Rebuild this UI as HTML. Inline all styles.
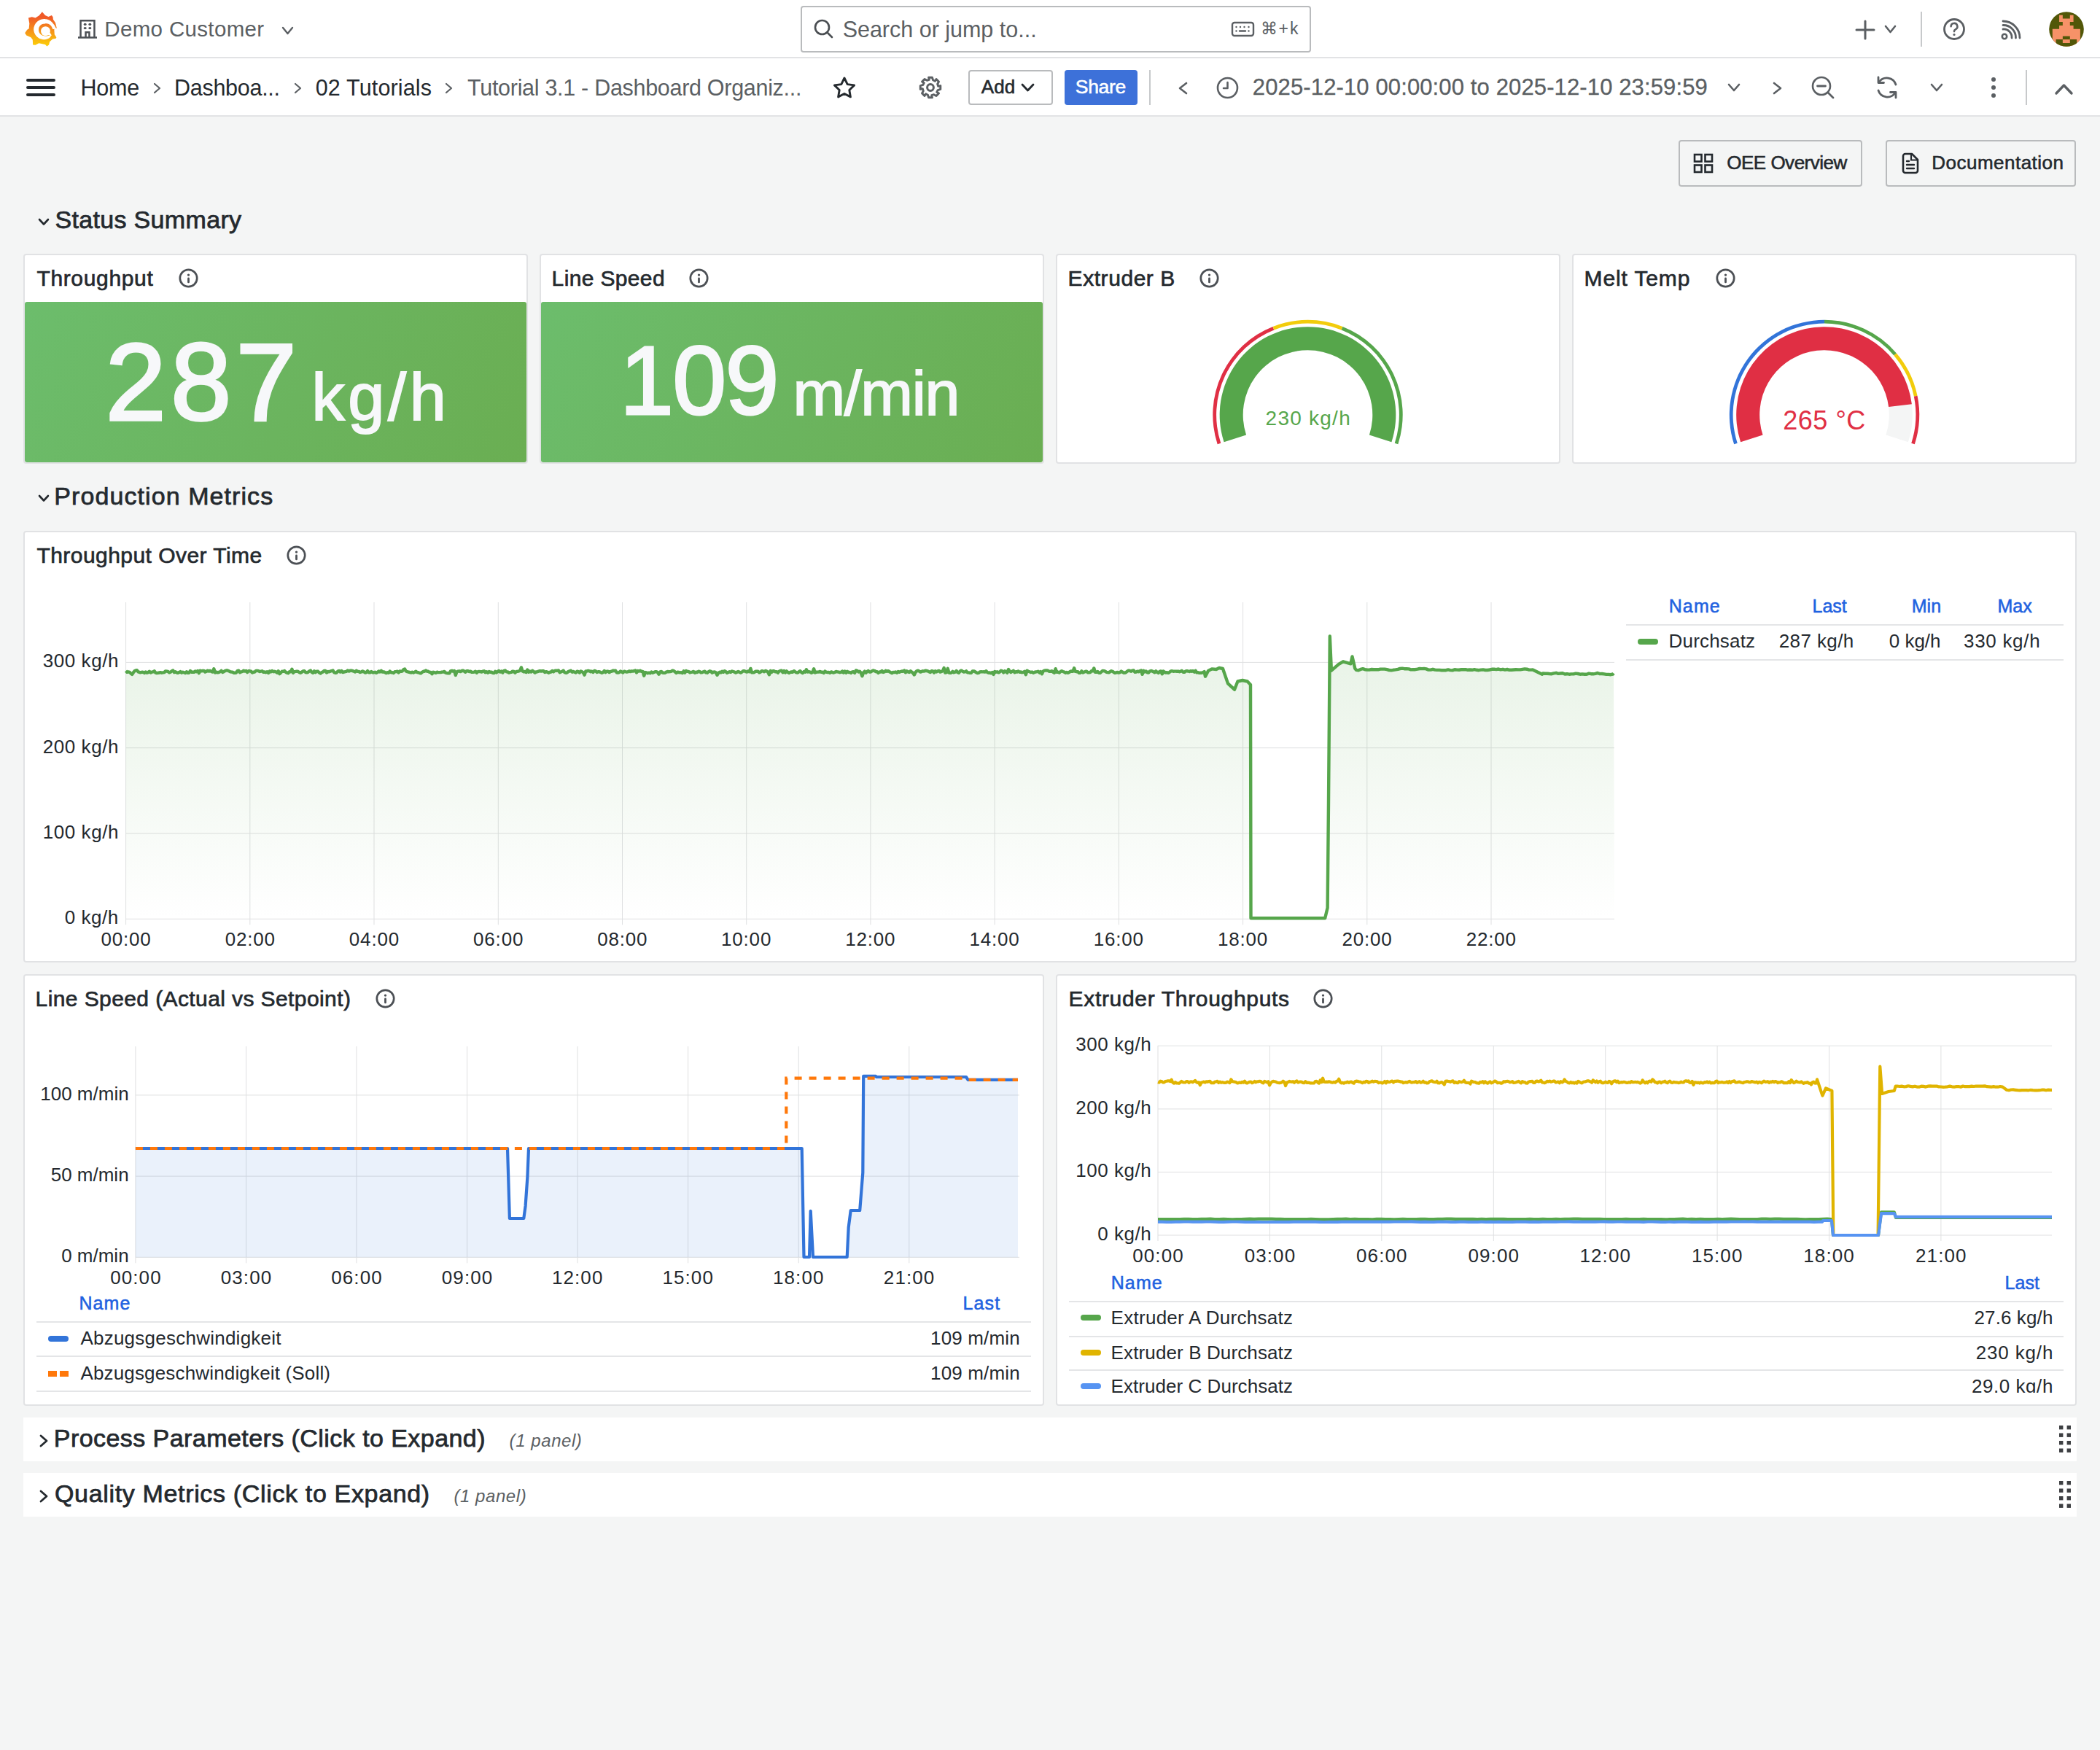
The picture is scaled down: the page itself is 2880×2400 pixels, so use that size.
<!DOCTYPE html>
<html><head><meta charset="utf-8"><title>Grafana</title>
<style>
html,body{margin:0;padding:0;}
body{width:2880px;height:2400px;background:#f4f5f5;position:relative;overflow:hidden;font-family:"Liberation Sans",sans-serif;}
.t{position:absolute;white-space:nowrap;line-height:1em;}
svg{overflow:visible}
@media (max-width:1500px){html{zoom:0.5}}
</style></head><body>
<div style="position:absolute;left:0px;top:0px;width:2880px;height:78px;background:#fff"></div>
<div style="position:absolute;left:0px;top:78px;width:2880px;height:2px;background:#e2e3e5"></div>
<div style="position:absolute;left:0px;top:80px;width:2880px;height:78px;background:#fff"></div>
<div style="position:absolute;left:0px;top:158px;width:2880px;height:2px;background:#e2e3e5"></div>
<svg style="position:absolute;left:28px;top:10px;" width="60" height="60" viewBox="0 0 1750 1750"><defs><linearGradient id="lg" x1="0" y1="0" x2="0" y2="1"><stop offset="0.15" stop-color="#f05a28"/><stop offset="0.95" stop-color="#fbca0a"/></linearGradient></defs><polygon points="870,180 990,320 1120,380 1250,320 1300,390 1310,490 1400,620 1455,840 1420,860 1350,880 1365,1090 1440,1200 1420,1250 1290,1270 1170,1380 1140,1500 1060,1560 990,1490 740,1440 600,1510 500,1500 490,1300 420,1200 240,1120 180,1030 270,900 340,850 360,650 320,420 460,390 600,420 750,330" fill="url(#lg)"/><polygon points="1490,871 1469,853 1447,837 1425,823 1402,810 1397,795 1392,780 1385,766 1379,752 1372,738 1364,725 1356,712 1348,699 1339,687 1330,675 1320,664 1310,653 1300,642 1291,630 1282,619 1273,608 1263,597 1253,587 1242,577 1231,568 1220,559 1209,550 1197,542 1185,534 1173,526 1160,519 1147,513 1134,506 1121,501 1108,495 1094,491 1080,486 1066,483 1052,479 1038,477 1024,474 1010,472 996,471 981,470 967,470 953,470 939,470 924,470 910,472 896,473 881,475 867,478 853,481 839,484 825,488 811,493 798,498 784,503 771,509 758,516 745,523 733,530 720,538 708,546 697,555 685,564 674,573 663,583 653,593 642,604 633,615 623,626 614,638 606,650 597,662 590,675 582,688 575,701 569,714 563,728 557,741 552,755 548,770 544,784 540,798 537,813 535,828 533,843 531,858 530,872 530,888 531,902 533,917 535,932 537,947 540,962 544,976 548,990 552,1005 557,1019 563,1032 569,1046 575,1059 582,1072 590,1085 597,1098 606,1110 614,1122 623,1134 633,1145 642,1156 653,1167 663,1177 674,1187 685,1196 697,1205 708,1214 720,1222 733,1230 745,1237 758,1244 771,1251 784,1257 798,1262 811,1267 825,1272 839,1276 853,1279 867,1282 881,1285 896,1287 910,1288 924,1290 939,1290 953,1290 967,1290 981,1288 996,1287 1010,1285 1024,1282 1038,1279 1051,1275 1065,1271 1078,1267 1091,1262 1104,1256 1117,1250 1130,1244 1142,1237 1154,1230 1165,1221 1175,1211 1184,1200 1193,1189 1201,1178 1209,1167 1217,1155 1224,1144 1230,1132 1236,1120 1241,1108 1230,1099 1219,1105 1208,1111 1196,1116 1185,1121 1173,1125 1162,1129 1150,1132 1139,1135 1127,1137 1116,1139 1105,1141 1095,1144 1084,1147 1074,1149 1064,1150 1053,1152 1043,1152 1033,1153 1023,1153 1013,1153 1003,1152 993,1151 984,1150 974,1148 965,1146 955,1145 946,1143 937,1142 928,1140 919,1138 910,1136 902,1133 893,1130 884,1127 876,1124 868,1120 860,1116 852,1111 844,1107 837,1102 830,1097 823,1091 816,1086 809,1080 803,1074 797,1068 791,1062 785,1055 780,1048 774,1041 769,1034 765,1027 760,1020 756,1012 753,1005 749,997 746,989 743,981 740,973 738,965 736,957 734,949 732,941 731,933 730,925 729,917 729,908 729,900 729,892 730,884 730,876 731,868 731,860 732,852 734,844 735,836 737,829 739,821 742,813 745,806 747,798 751,791 754,784 758,777 762,770 766,763 770,757 775,750 780,744 785,738 790,732 795,726 801,721 807,716 813,711 819,706 825,701 832,697 838,692 845,688 852,685 859,681 866,678 873,675 880,672 888,670 895,668 903,666 910,664 918,663 925,662 933,661 941,660 948,660 956,660 964,659 972,656 980,654 988,653 996,651 1005,650 1013,650 1022,649 1031,649 1039,649 1048,650 1057,651 1066,652 1075,653 1085,655 1094,658 1103,660 1112,663 1121,667 1130,670 1139,675 1147,679 1156,684 1165,689 1173,695 1181,701 1190,707 1198,714 1205,721 1212,728 1219,736 1226,744 1233,753 1239,762 1245,771 1250,780 1256,790 1261,799 1266,809 1270,820 1274,830 1280,841 1285,852 1290,863 1295,874" fill="#fff"/><circle cx="1005" cy="950" r="188" fill="#fff"/><polygon points="1040,1000 1190,1020 1250,1130 1040,1100" fill="#fff"/></svg>
<svg style="position:absolute;left:105px;top:25px;" width="30" height="30" viewBox="0 0 30 30"><path d="M2 26.6 H28 M5.55 26.6 V3.25 H24.45 V26.6" fill="none" stroke="#4c5055" stroke-width="2.5"/><path d="M12.55 26.6 V19.35 H17.45 V26.6" fill="none" stroke="#4c5055" stroke-width="2.5"/><ellipse cx="11.7" cy="8.4" rx="2" ry="1.6" fill="#4c5055"/><ellipse cx="18.3" cy="8.4" rx="2" ry="1.6" fill="#4c5055"/><ellipse cx="11.7" cy="13.6" rx="2" ry="1.6" fill="#4c5055"/><ellipse cx="18.3" cy="13.6" rx="2" ry="1.6" fill="#4c5055"/></svg>
<div class="t" style="top:25.33px;left:143.34px;font-size:29.5px;color:#5b5f63;letter-spacing:0.337px;">Demo Customer</div>
<svg style="position:absolute;left:384.5px;top:34.5px;" width="19" height="14" viewBox="0 0 19 14"><polyline points="3,3 9.5,11 16,3" fill="none" stroke="#5b5f63" stroke-width="2.4" stroke-linecap="round" stroke-linejoin="round"/></svg>
<div style="position:absolute;left:1098px;top:8px;width:696px;height:60px;border:2px solid #b9bbbd;border-radius:4px;background:#fff"></div>
<svg style="position:absolute;left:1115px;top:25px;" width="30" height="30" viewBox="0 0 30 30"><circle cx="12.5" cy="12.5" r="9.5" fill="none" stroke="#4a4e52" stroke-width="2.6"/><line x1="19.5" y1="19.5" x2="26" y2="26" stroke="#4a4e52" stroke-width="2.6" stroke-linecap="round"/></svg>
<div class="t" style="top:24.68px;left:1155.63px;font-size:30.5px;color:#5b5f63;letter-spacing:-0.008px;">Search or jump to...</div>
<svg style="position:absolute;left:1688px;top:29px;" width="33" height="22" viewBox="0 0 33 22"><rect x="2" y="2" width="29" height="18" rx="3" fill="none" stroke="#5b5f63" stroke-width="2.4"/><circle cx="7.5" cy="8" r="1.2" fill="#5b5f63"/><circle cx="13" cy="8" r="1.2" fill="#5b5f63"/><circle cx="18.5" cy="8" r="1.2" fill="#5b5f63"/><circle cx="24.5" cy="8" r="1.2" fill="#5b5f63"/><circle cx="7.5" cy="13.5" r="1.2" fill="#5b5f63"/><line x1="12" y1="13.5" x2="20" y2="13.5" stroke="#5b5f63" stroke-width="2.4" stroke-linecap="round"/><circle cx="24.5" cy="13.5" r="1.2" fill="#5b5f63"/></svg>
<div class="t" style="top:28.13px;left:1728.70px;font-size:23px;color:#5b5f63;letter-spacing:1.900px;">⌘+k</div>
<svg style="position:absolute;left:2544px;top:27px;" width="28" height="28" viewBox="0 0 28 28"><path d="M14 2 V26 M2 14 H26" stroke="#5b5f63" stroke-width="3" stroke-linecap="round"/></svg>
<svg style="position:absolute;left:2582.5px;top:33.0px;" width="19" height="14" viewBox="0 0 19 14"><polyline points="3,3 9.5,11 16,3" fill="none" stroke="#5b5f63" stroke-width="2.6" stroke-linecap="round" stroke-linejoin="round"/></svg>
<div style="position:absolute;left:2634px;top:16px;width:2px;height:48px;background:#c7c9cb"></div>
<svg style="position:absolute;left:2663px;top:23px;" width="34" height="34" viewBox="0 0 34 34"><circle cx="17" cy="17" r="13.5" fill="none" stroke="#5b5f63" stroke-width="2.8"/><path d="M12.6 13.3 a4.4 4.4 0 1 1 6.2 4 c-1.2.6-1.8 1.4-1.8 2.8" fill="none" stroke="#5b5f63" stroke-width="2.6" stroke-linecap="round"/><circle cx="17" cy="24.5" r="1.6" fill="#5b5f63"/></svg>
<svg style="position:absolute;left:2743px;top:26px;" width="32" height="32" viewBox="0 0 32 32"><circle cx="6" cy="24" r="3.2" fill="none" stroke="#5b5f63" stroke-width="2.6"/><path d="M4 14 a11 11 0 0 1 12 12" fill="none" stroke="#5b5f63" stroke-width="2.8" stroke-linecap="round"/><path d="M4 8.5 a17 17 0 0 1 17.5 17.5" fill="none" stroke="#5b5f63" stroke-width="2.8" stroke-linecap="round"/><path d="M4 3 a23 23 0 0 1 23 23" fill="none" stroke="#5b5f63" stroke-width="2.8" stroke-linecap="round"/></svg>
<svg style="position:absolute;left:2810px;top:16px;" width="48" height="48" viewBox="0 0 48 48"><defs><clipPath id="av"><circle cx="24" cy="24" r="23.8"/></clipPath></defs><g clip-path="url(#av)"><rect width="48" height="48" fill="#525708"/><path d="M14.06 4.8 H18.85 V9.6 H28.8 V4.8 H33.6 V14.1 H28.8 V18.9 H33.6 V23.7 H42.9 V48 H4.8 V23.7 H14.06 V18.9 H18.85 V14.1 H14.06 Z" fill="#f79268"/><rect x="18.85" y="33.6" width="9.95" height="4.5" fill="#525708"/><path d="M9.6 38.1 H18.85 V42.9 H28.8 V38.1 H38.1 V48 H9.6 Z" fill="#525708"/></g></svg>
<svg style="position:absolute;left:34px;top:106px;" width="44" height="28" viewBox="0 0 44 28"><path d="M4 4 H40 M4 14 H40 M4 24 H40" stroke="#24292e" stroke-width="4" stroke-linecap="round"/></svg>
<div class="t" style="top:104.88px;left:110.56px;font-size:30.5px;color:#24292e;letter-spacing:-0.208px;">Home</div>
<svg style="position:absolute;left:209.3px;top:111.5px;" width="13" height="18" viewBox="0 0 13 18"><polyline points="3,3 10,9.0 3,15" fill="none" stroke="#5b5f63" stroke-width="2.2" stroke-linecap="round" stroke-linejoin="round"/></svg>
<div class="t" style="top:104.88px;left:238.96px;font-size:30.5px;color:#24292e;letter-spacing:-0.271px;">Dashboa...</div>
<svg style="position:absolute;left:401.9px;top:111.5px;" width="13" height="18" viewBox="0 0 13 18"><polyline points="3,3 10,9.0 3,15" fill="none" stroke="#5b5f63" stroke-width="2.2" stroke-linecap="round" stroke-linejoin="round"/></svg>
<div class="t" style="top:104.88px;left:432.78px;font-size:30.5px;color:#24292e;letter-spacing:0.146px;">02 Tutorials</div>
<svg style="position:absolute;left:608.9px;top:111.5px;" width="13" height="18" viewBox="0 0 13 18"><polyline points="3,3 10,9.0 3,15" fill="none" stroke="#5b5f63" stroke-width="2.2" stroke-linecap="round" stroke-linejoin="round"/></svg>
<div class="t" style="top:104.88px;left:641.09px;font-size:30.5px;color:#5b5f63;letter-spacing:-0.298px;">Tutorial 3.1 - Dashboard Organiz...</div>
<svg style="position:absolute;left:1141px;top:104px;" width="34" height="32" viewBox="0 0 34 32"><path d="M17 3 L21.2 11.6 L30.6 12.9 L23.8 19.5 L25.4 28.9 L17 24.5 L8.6 28.9 L10.2 19.5 L3.4 12.9 L12.8 11.6 Z" fill="none" stroke="#24292e" stroke-width="2.9" stroke-linejoin="round"/></svg>
<svg style="position:absolute;left:1260px;top:104px;" width="32" height="32" viewBox="0 0 32 32"><polygon points="29.79,13.57 29.79,18.43 26.21,19.52 24.74,22.35 27.47,24.03 24.03,27.47 20.73,25.71 17.69,26.67 18.43,29.79 13.57,29.79 12.48,26.21 9.65,24.74 7.97,27.47 4.53,24.03 6.29,20.73 5.33,17.69 2.21,18.43 2.21,13.57 5.79,12.48 7.26,9.65 4.53,7.97 7.97,4.53 11.27,6.29 14.31,5.33 13.57,2.21 18.43,2.21 19.52,5.79 22.35,7.26 24.03,4.53 27.47,7.97 25.71,11.27 26.67,14.31" fill="none" stroke="#5b5f63" stroke-width="2.9" stroke-linejoin="round"/><circle cx="16" cy="16" r="4.4" fill="none" stroke="#5b5f63" stroke-width="3"/></svg>
<div style="position:absolute;left:1328px;top:96px;width:112px;height:44px;border:2px solid #b9bbbd;border-radius:4px;background:#fff"></div>
<div class="t" style="top:105.99px;left:1345.70px;font-size:26px;color:#24292e;-webkit-text-stroke:0.57px #24292e;letter-spacing:0.140px;">Add</div>
<svg style="position:absolute;left:1399.0px;top:113.0px;" width="21" height="14" viewBox="0 0 21 14"><polyline points="3,3 10.5,11 18,3" fill="none" stroke="#24292e" stroke-width="2.8" stroke-linecap="round" stroke-linejoin="round"/></svg>
<div style="position:absolute;left:1460px;top:96px;width:100px;height:48px;background:#3d71d9;border-radius:4px"></div>
<div class="t" style="top:105.57px;left:1474.81px;font-size:26.5px;color:#fff;-webkit-text-stroke:0.58px #fff;letter-spacing:-0.343px;">Share</div>
<div style="position:absolute;left:1576px;top:96px;width:2px;height:48px;background:#c7c9cb"></div>
<svg style="position:absolute;left:1615.3px;top:110.5px;" width="15" height="20" viewBox="0 0 15 20"><polyline points="12,3 3,10.0 12,17" fill="none" stroke="#5b5f63" stroke-width="2.6" stroke-linecap="round" stroke-linejoin="round"/></svg>
<svg style="position:absolute;left:1667px;top:104px;" width="33" height="33" viewBox="0 0 33 33"><circle cx="16.5" cy="16.5" r="13.5" fill="none" stroke="#5b5f63" stroke-width="2.6"/><path d="M16.5 9 V17 H11" fill="none" stroke="#5b5f63" stroke-width="2.6" stroke-linecap="round" stroke-linejoin="round"/></svg>
<div class="t" style="top:103.76px;left:1717.85px;font-size:31px;color:#5b5f63;letter-spacing:0.126px;-webkit-text-stroke:0.3px #5b5f63;">2025-12-10 00:00:00 to 2025-12-10 23:59:59</div>
<svg style="position:absolute;left:2368.0px;top:113.0px;" width="20" height="14" viewBox="0 0 20 14"><polyline points="3,3 10.0,11 17,3" fill="none" stroke="#5b5f63" stroke-width="2.6" stroke-linecap="round" stroke-linejoin="round"/></svg>
<svg style="position:absolute;left:2430.4px;top:110.5px;" width="15" height="20" viewBox="0 0 15 20"><polyline points="3,3 12,10.0 3,17" fill="none" stroke="#5b5f63" stroke-width="2.6" stroke-linecap="round" stroke-linejoin="round"/></svg>
<svg style="position:absolute;left:2483px;top:103px;" width="34" height="34" viewBox="0 0 34 34"><circle cx="15" cy="15" r="12" fill="none" stroke="#5b5f63" stroke-width="2.6"/><line x1="9.5" y1="15" x2="20.5" y2="15" stroke="#5b5f63" stroke-width="2.8" stroke-linecap="round"/><line x1="24" y1="24" x2="31" y2="31" stroke="#5b5f63" stroke-width="2.8" stroke-linecap="round"/></svg>
<svg style="position:absolute;left:2571px;top:103px;" width="34" height="34" viewBox="0 0 34 34"><path d="M6 9.5 A13 13 0 0 1 29 13" fill="none" stroke="#5b5f63" stroke-width="2.8" stroke-linecap="round"/><path d="M28 24.5 A13 13 0 0 1 5 21" fill="none" stroke="#5b5f63" stroke-width="2.8" stroke-linecap="round"/><path d="M5 3 V10.5 H12.5" fill="none" stroke="#5b5f63" stroke-width="2.8" stroke-linecap="round" stroke-linejoin="round"/><path d="M29 31 V23.5 H21.5" fill="none" stroke="#5b5f63" stroke-width="2.8" stroke-linecap="round" stroke-linejoin="round"/></svg>
<svg style="position:absolute;left:2646.0px;top:113.0px;" width="20" height="14" viewBox="0 0 20 14"><polyline points="3,3 10.0,11 17,3" fill="none" stroke="#5b5f63" stroke-width="2.6" stroke-linecap="round" stroke-linejoin="round"/></svg>
<svg style="position:absolute;left:2728px;top:104px;" width="12" height="32" viewBox="0 0 12 32"><circle cx="6" cy="5" r="3" fill="#5b5f63"/><circle cx="6" cy="16" r="3" fill="#5b5f63"/><circle cx="6" cy="27" r="3" fill="#5b5f63"/></svg>
<div style="position:absolute;left:2778px;top:96px;width:2px;height:48px;background:#c7c9cb"></div>
<svg style="position:absolute;left:2816.5px;top:113.8px;" width="27" height="17" viewBox="0 0 27 17"><polyline points="3,14 13.5,3 24,14" fill="none" stroke="#5b5f63" stroke-width="3.4" stroke-linecap="round" stroke-linejoin="round"/></svg>
<div style="position:absolute;left:2302px;top:192px;width:248px;height:60px;border:2px solid #b9bbbd;border-radius:4px"></div>
<svg style="position:absolute;left:2321px;top:209px;" width="30" height="30" viewBox="0 0 30 30"><rect x="3" y="3" width="9.5" height="9.5" fill="none" stroke="#24292e" stroke-width="2.6"/><rect x="17.5" y="3" width="9.5" height="9.5" fill="none" stroke="#24292e" stroke-width="2.6"/><rect x="3" y="17.5" width="9.5" height="9.5" fill="none" stroke="#24292e" stroke-width="2.6"/><rect x="17.5" y="17.5" width="9.5" height="9.5" fill="none" stroke="#24292e" stroke-width="2.6"/></svg>
<div class="t" style="top:210.29px;left:2368.23px;font-size:26px;color:#24292e;-webkit-text-stroke:0.57px #24292e;letter-spacing:-0.490px;">OEE Overview</div>
<div style="position:absolute;left:2586px;top:192px;width:257px;height:60px;border:2px solid #b9bbbd;border-radius:4px"></div>
<svg style="position:absolute;left:2606px;top:209px;" width="28" height="30" viewBox="0 0 28 30"><path d="M4 5 a3 3 0 0 1 3 -3 H16 L24 10 V25 a3 3 0 0 1 -3 3 H7 a3 3 0 0 1 -3 -3 Z" fill="none" stroke="#24292e" stroke-width="2.6" stroke-linejoin="round"/><path d="M15 2.5 V10.5 H23.5" fill="none" stroke="#24292e" stroke-width="2.2"/><path d="M9 12 H12 M9 17 H19 M9 22 H19" stroke="#24292e" stroke-width="2.4" stroke-linecap="round"/></svg>
<div class="t" style="top:210.29px;left:2649.32px;font-size:26px;color:#24292e;-webkit-text-stroke:0.57px #24292e;letter-spacing:0.483px;">Documentation</div>
<svg style="position:absolute;left:51.0px;top:297.75px;" width="18" height="12.5" viewBox="0 0 18 12.5"><polyline points="3,3 9.0,9.5 15,3" fill="none" stroke="#24292e" stroke-width="2.6" stroke-linecap="round" stroke-linejoin="round"/></svg>
<div class="t" style="top:283.62px;left:75.47px;font-size:34px;color:#24292e;-webkit-text-stroke:0.75px #24292e;letter-spacing:0.328px;">Status Summary</div>
<div style="position:absolute;left:32px;top:348px;width:688px;height:284px;border:2px solid #e1e2e4;border-radius:4px;background:#fff"></div>
<div class="t" style="top:367.00px;left:50.40px;font-size:30px;color:#24292e;-webkit-text-stroke:0.66px #24292e;letter-spacing:0.661px;">Throughput</div>
<svg style="position:absolute;left:242.7px;top:366.1px;" width="31" height="31" viewBox="0 0 31 31"><circle cx="15.5" cy="15.5" r="11.7" fill="none" stroke="#4c5055" stroke-width="2.7"/><line x1="15.5" y1="15.9" x2="15.5" y2="20.9" stroke="#4c5055" stroke-width="2.8" stroke-linecap="round"/><circle cx="15.5" cy="11.1" r="1.7" fill="#4c5055"/></svg>
<div style="position:absolute;left:740px;top:348px;width:688px;height:284px;border:2px solid #e1e2e4;border-radius:4px;background:#fff"></div>
<div class="t" style="top:367.00px;left:756.60px;font-size:30px;color:#24292e;-webkit-text-stroke:0.66px #24292e;letter-spacing:0.356px;">Line Speed</div>
<svg style="position:absolute;left:943.0px;top:366.1px;" width="31" height="31" viewBox="0 0 31 31"><circle cx="15.5" cy="15.5" r="11.7" fill="none" stroke="#4c5055" stroke-width="2.7"/><line x1="15.5" y1="15.9" x2="15.5" y2="20.9" stroke="#4c5055" stroke-width="2.8" stroke-linecap="round"/><circle cx="15.5" cy="11.1" r="1.7" fill="#4c5055"/></svg>
<div style="position:absolute;left:1448px;top:348px;width:688px;height:284px;border:2px solid #e1e2e4;border-radius:4px;background:#fff"></div>
<div class="t" style="top:367.00px;left:1464.60px;font-size:30px;color:#24292e;-webkit-text-stroke:0.66px #24292e;letter-spacing:0.556px;">Extruder B</div>
<svg style="position:absolute;left:1642.8999999999999px;top:366.1px;" width="31" height="31" viewBox="0 0 31 31"><circle cx="15.5" cy="15.5" r="11.7" fill="none" stroke="#4c5055" stroke-width="2.7"/><line x1="15.5" y1="15.9" x2="15.5" y2="20.9" stroke="#4c5055" stroke-width="2.8" stroke-linecap="round"/><circle cx="15.5" cy="11.1" r="1.7" fill="#4c5055"/></svg>
<div style="position:absolute;left:2156px;top:348px;width:688px;height:284px;border:2px solid #e1e2e4;border-radius:4px;background:#fff"></div>
<div class="t" style="top:367.00px;left:2172.60px;font-size:30px;color:#24292e;-webkit-text-stroke:0.66px #24292e;letter-spacing:0.869px;">Melt Temp</div>
<svg style="position:absolute;left:2350.7000000000003px;top:366.1px;" width="31" height="31" viewBox="0 0 31 31"><circle cx="15.5" cy="15.5" r="11.7" fill="none" stroke="#4c5055" stroke-width="2.7"/><line x1="15.5" y1="15.9" x2="15.5" y2="20.9" stroke="#4c5055" stroke-width="2.8" stroke-linecap="round"/><circle cx="15.5" cy="11.1" r="1.7" fill="#4c5055"/></svg>
<div style="position:absolute;left:34px;top:414px;width:688px;height:220px;background:linear-gradient(120deg,#6cbd6c 0%,#6bb45e 55%,#6aae52 100%);border-radius:3px"></div>
<div style="position:absolute;left:742px;top:414px;width:688px;height:220px;background:linear-gradient(120deg,#6cbd6c 0%,#6bb45e 55%,#6aae52 100%);border-radius:3px"></div>
<div class="t" style="top:449.12px;left:144.50px;font-size:150px;color:#f7f8fa;-webkit-text-stroke:3.30px #f7f8fa;letter-spacing:6.125px;">287</div>
<div class="t" style="top:499.92px;left:427.45px;font-size:90px;color:#f7f8fa;-webkit-text-stroke:1.98px #f7f8fa;letter-spacing:4.717px;">kg/h</div>
<div class="t" style="top:456.32px;left:850.02px;font-size:133px;color:#f7f8fa;-webkit-text-stroke:2.93px #f7f8fa;letter-spacing:-1.743px;">109</div>
<div class="t" style="top:496.10px;left:1087.41px;font-size:86px;color:#f7f8fa;-webkit-text-stroke:1.89px #f7f8fa;letter-spacing:-1.292px;">m/min</div>
<svg style="position:absolute;left:0;top:0" width="2880" height="700"><path d="M1678.61 606.33 A120.8 120.8 0 1 1 1908.39 606.33 L1877.95 596.44 A88.8 88.8 0 1 0 1709.05 596.44 Z" fill="#f4f5f5"/><path d="M1678.61 606.33 A120.8 120.8 0 1 1 1908.39 606.33 L1877.95 596.44 A88.8 88.8 0 1 0 1709.05 596.44 Z" fill="#56a64b"/><path d="M1669.67 609.23 A130.2 130.2 0 0 1 1745.57 447.94 L1747.34 452.41 A125.4 125.4 0 0 0 1674.24 607.75 Z" fill="#e02f44"/><path d="M1745.57 447.94 A130.2 130.2 0 0 1 1841.43 447.94 L1839.66 452.41 A125.4 125.4 0 0 0 1747.34 452.41 Z" fill="#f2cc0c"/><path d="M1841.43 447.94 A130.2 130.2 0 0 1 1917.33 609.23 L1912.76 607.75 A125.4 125.4 0 0 0 1839.66 452.41 Z" fill="#56a64b"/></svg>
<div class="t" style="top:560.10px;left:1735.60px;font-size:28px;color:#56a64b;letter-spacing:1.243px;">230 kg/h</div>
<svg style="position:absolute;left:0;top:0" width="2880" height="700"><path d="M2387.11 606.33 A120.8 120.8 0 1 1 2616.89 606.33 L2586.45 596.44 A88.8 88.8 0 1 0 2417.55 596.44 Z" fill="#f4f5f5"/><path d="M2387.11 606.33 A120.8 120.8 0 1 1 2621.89 554.16 L2590.13 558.09 A88.8 88.8 0 1 0 2417.55 596.44 Z" fill="#e02f44"/><path d="M2378.17 609.23 A130.2 130.2 0 0 1 2502.00 438.80 L2502.00 443.60 A125.4 125.4 0 0 0 2382.74 607.75 Z" fill="#3274d9"/><path d="M2502.00 438.80 A130.2 130.2 0 0 1 2600.95 484.38 L2597.30 487.50 A125.4 125.4 0 0 0 2502.00 443.60 Z" fill="#56a64b"/><path d="M2600.95 484.38 A130.2 130.2 0 0 1 2629.54 542.84 L2624.84 543.80 A125.4 125.4 0 0 0 2597.30 487.50 Z" fill="#f2cc0c"/><path d="M2629.54 542.84 A130.2 130.2 0 0 1 2625.83 609.23 L2621.26 607.75 A125.4 125.4 0 0 0 2624.84 543.80 Z" fill="#e02f44"/></svg>
<div class="t" style="top:558.93px;left:2445.20px;font-size:36px;color:#e02f44;letter-spacing:0.544px;">265 °C</div>
<svg style="position:absolute;left:51.0px;top:677.35px;" width="18" height="12.5" viewBox="0 0 18 12.5"><polyline points="3,3 9.0,9.5 15,3" fill="none" stroke="#24292e" stroke-width="2.6" stroke-linecap="round" stroke-linejoin="round"/></svg>
<div class="t" style="top:663.22px;left:74.28px;font-size:34px;color:#24292e;-webkit-text-stroke:0.75px #24292e;letter-spacing:1.082px;">Production Metrics</div>
<div style="position:absolute;left:32px;top:728px;width:2812px;height:588px;border:2px solid #e1e2e4;border-radius:4px;background:#fff"></div>
<div class="t" style="top:746.61px;left:50.40px;font-size:30px;color:#24292e;-webkit-text-stroke:0.66px #24292e;letter-spacing:0.455px;">Throughput Over Time</div>
<svg style="position:absolute;left:390.8px;top:746.3000000000001px;" width="31" height="31" viewBox="0 0 31 31"><circle cx="15.5" cy="15.5" r="11.7" fill="none" stroke="#4c5055" stroke-width="2.7"/><line x1="15.5" y1="15.9" x2="15.5" y2="20.9" stroke="#4c5055" stroke-width="2.8" stroke-linecap="round"/><circle cx="15.5" cy="11.1" r="1.7" fill="#4c5055"/></svg>
<svg style="position:absolute;left:0;top:0" width="2880" height="1400"><rect x="172.1" y="826" width="1" height="442.29999999999995" fill="#dfe0e2"/><rect x="342.3" y="826" width="1" height="442.29999999999995" fill="#dfe0e2"/><rect x="512.5" y="826" width="1" height="442.29999999999995" fill="#dfe0e2"/><rect x="682.8" y="826" width="1" height="442.29999999999995" fill="#dfe0e2"/><rect x="853.0" y="826" width="1" height="442.29999999999995" fill="#dfe0e2"/><rect x="1023.2" y="826" width="1" height="442.29999999999995" fill="#dfe0e2"/><rect x="1193.4" y="826" width="1" height="442.29999999999995" fill="#dfe0e2"/><rect x="1363.6" y="826" width="1" height="442.29999999999995" fill="#dfe0e2"/><rect x="1533.9" y="826" width="1" height="442.29999999999995" fill="#dfe0e2"/><rect x="1704.1" y="826" width="1" height="442.29999999999995" fill="#dfe0e2"/><rect x="1874.3" y="826" width="1" height="442.29999999999995" fill="#dfe0e2"/><rect x="2044.5" y="826" width="1" height="442.29999999999995" fill="#dfe0e2"/><rect x="172.6" y="1259.8" width="2041.4" height="1" fill="#dfe0e2"/><rect x="172.6" y="1142.5" width="2041.4" height="1" fill="#dfe0e2"/><rect x="172.6" y="1025.2" width="2041.4" height="1" fill="#dfe0e2"/><rect x="172.6" y="907.9" width="2041.4" height="1" fill="#dfe0e2"/><defs><linearGradient id="tg" x1="0" y1="0" x2="0" y2="1"><stop offset="0" stop-color="#56a64b" stop-opacity="0.14"/><stop offset="1" stop-color="#56a64b" stop-opacity="0"/></linearGradient></defs><polygon points="172.6,920.1 174.3,921.9 176.0,921.4 177.7,921.8 179.4,923.5 181.1,924.9 182.8,922.4 184.5,920.3 186.2,919.5 187.9,919.3 189.6,921.4 191.3,922.0 193.0,922.3 194.7,921.7 196.4,922.0 198.1,922.9 199.8,921.4 201.5,922.7 203.2,922.1 204.9,920.8 206.6,922.5 208.3,921.6 210.0,921.4 211.7,920.3 213.4,922.6 215.1,923.0 216.8,922.9 218.5,922.5 220.2,922.1 221.9,922.7 223.6,922.4 225.3,922.1 227.0,920.4 228.7,920.7 230.4,921.0 232.1,922.4 233.8,921.8 235.5,920.4 237.2,919.5 238.9,922.2 240.6,921.2 242.3,922.4 244.0,922.9 245.7,922.0 247.4,921.1 249.1,922.7 250.8,921.7 252.5,922.3 254.2,923.0 255.9,921.3 257.6,922.7 259.3,922.7 261.0,920.0 262.7,921.9 264.4,921.8 266.1,921.9 267.8,920.4 269.5,921.2 271.2,920.0 272.9,923.1 274.6,919.7 276.3,920.4 278.0,920.0 279.7,919.9 281.4,921.6 283.1,920.8 284.8,919.7 286.5,920.6 288.2,919.9 289.9,921.0 291.6,921.6 293.3,917.3 295.0,922.4 296.7,921.6 298.4,922.4 300.1,922.0 301.8,921.3 303.5,919.8 305.2,921.9 306.9,921.2 308.6,920.1 310.3,919.5 312.0,919.5 313.7,920.2 315.4,921.2 317.1,921.5 318.8,921.6 320.5,922.7 322.2,922.7 323.9,922.5 325.6,920.1 327.3,919.7 329.0,922.2 330.7,921.5 332.4,921.0 334.1,919.7 335.8,920.6 337.5,920.0 339.2,922.0 340.9,920.3 342.6,920.3 344.3,920.7 346.0,922.5 347.7,921.7 349.4,921.5 351.1,919.9 352.8,919.9 354.5,920.2 356.2,921.0 357.9,920.7 359.6,920.3 361.3,921.9 363.0,921.4 364.7,922.2 366.4,921.2 368.1,922.9 369.8,920.5 371.5,921.4 373.2,920.0 374.9,921.2 376.6,920.8 378.3,921.3 380.0,922.6 381.7,920.2 383.4,924.1 385.1,922.6 386.8,920.8 388.5,920.9 390.2,920.1 391.9,921.8 393.6,922.7 395.3,923.2 397.0,921.1 398.7,921.2 400.4,917.7 402.1,922.8 403.8,921.1 405.5,920.9 407.2,920.6 408.9,921.0 410.6,922.1 412.3,922.8 414.0,921.6 415.7,920.4 417.4,920.1 419.1,922.0 420.8,922.3 422.5,921.8 424.2,920.5 425.9,919.6 427.6,921.8 429.3,922.8 431.0,920.4 432.7,922.1 434.4,920.6 436.1,920.8 437.8,922.4 439.5,923.5 441.2,922.1 442.9,921.5 444.6,920.0 446.3,919.9 448.0,922.5 449.7,921.0 451.4,921.3 453.1,920.6 454.8,920.0 456.5,919.5 458.2,922.1 459.9,922.8 461.6,922.5 463.3,920.6 465.0,920.0 466.7,921.5 468.4,920.0 470.1,922.0 471.8,921.6 473.5,921.2 475.2,920.8 476.9,919.6 478.6,920.6 480.3,919.7 482.0,919.7 483.7,920.1 485.4,920.7 487.1,921.5 488.8,919.8 490.5,920.9 492.2,921.0 493.9,922.0 495.6,921.5 497.3,920.5 499.0,921.3 500.7,922.6 502.4,922.1 504.1,920.1 505.8,922.2 507.5,922.4 509.2,921.0 510.9,922.3 512.6,922.2 514.3,921.8 516.0,922.7 517.7,921.9 519.4,920.6 521.1,921.4 522.8,919.9 524.5,921.6 526.2,921.4 527.9,922.1 529.6,923.0 531.3,922.1 533.0,922.8 534.7,920.5 536.4,922.2 538.1,922.2 539.8,922.9 541.5,921.3 543.2,921.1 544.9,920.7 546.6,922.5 548.3,920.4 550.0,920.8 551.7,920.5 553.4,918.3 555.1,917.5 556.8,920.5 558.5,921.2 560.2,921.6 561.9,922.0 563.6,922.5 565.3,921.7 567.0,922.5 568.7,921.8 570.4,920.7 572.1,922.1 573.8,922.3 575.5,923.0 577.2,923.2 578.9,921.8 580.6,920.8 582.3,920.7 584.0,919.6 585.7,920.7 587.4,920.8 589.1,921.8 590.8,921.9 592.5,924.3 594.2,921.8 595.9,922.2 597.6,922.9 599.3,921.7 601.0,922.1 602.7,922.1 604.4,922.1 606.1,921.6 607.8,921.6 609.5,920.9 611.2,922.7 612.9,923.1 614.6,923.3 616.3,923.3 618.0,920.3 619.7,919.9 621.4,920.6 623.1,920.1 624.8,926.0 626.5,921.2 628.2,920.6 629.9,920.4 631.6,921.1 633.3,920.0 635.0,919.6 636.7,920.7 638.4,921.8 640.1,920.1 641.8,920.3 643.5,921.1 645.2,920.7 646.9,921.8 648.6,921.9 650.3,921.6 652.0,920.7 653.7,922.7 655.4,921.2 657.1,920.9 658.8,921.2 660.5,921.6 662.2,920.6 663.9,920.3 665.6,922.2 667.3,921.2 669.0,922.7 670.7,920.9 672.4,921.9 674.1,921.7 675.8,922.8 677.5,923.1 679.2,920.7 680.9,922.4 682.6,921.0 684.3,920.0 686.0,921.6 687.7,920.5 689.4,922.5 691.1,920.1 692.8,919.5 694.5,921.4 696.2,921.4 697.9,922.6 699.6,922.1 701.3,921.9 703.0,920.6 704.7,921.0 706.4,922.7 708.1,921.0 709.8,920.9 711.5,920.4 713.2,919.8 714.9,915.4 716.6,920.3 718.3,921.3 720.0,921.0 721.7,922.0 723.4,918.6 725.1,921.8 726.8,920.6 728.5,921.6 730.2,919.8 731.9,921.0 733.6,922.6 735.3,921.4 737.0,921.3 738.7,920.6 740.4,920.1 742.1,920.5 743.8,920.3 745.5,920.2 747.2,922.0 748.9,921.2 750.6,921.7 752.3,922.7 754.0,921.8 755.7,921.5 757.4,920.0 759.1,921.3 760.8,919.9 762.5,919.7 764.2,919.9 765.9,919.5 767.6,922.2 769.3,921.5 771.0,920.8 772.7,919.7 774.4,922.2 776.1,922.8 777.8,922.4 779.5,920.8 781.2,920.5 782.9,919.7 784.6,921.7 786.3,921.0 788.0,921.8 789.7,922.5 791.4,920.7 793.1,921.2 794.8,922.5 796.5,920.4 798.2,921.2 799.9,922.4 801.6,925.6 803.3,920.4 805.0,920.5 806.7,919.9 808.4,920.3 810.1,921.2 811.8,920.7 813.5,921.9 815.2,919.9 816.9,920.4 818.6,922.0 820.3,921.3 822.0,921.2 823.7,922.0 825.4,922.7 827.1,921.9 828.8,920.0 830.5,922.1 832.2,920.7 833.9,920.6 835.6,922.1 837.3,920.9 839.0,920.7 840.7,919.6 842.4,920.0 844.1,919.7 845.8,922.3 847.5,922.6 849.2,922.2 850.9,920.6 852.6,921.3 854.3,922.4 856.0,920.7 857.7,921.2 859.4,921.6 861.1,921.3 862.8,920.4 864.5,921.1 866.2,920.4 867.9,920.6 869.6,920.1 871.3,919.6 873.0,922.4 874.7,920.0 876.4,920.6 878.1,919.8 879.8,920.9 881.5,921.0 883.2,926.7 884.9,922.1 886.6,922.5 888.3,923.2 890.0,922.7 891.7,923.2 893.4,921.5 895.1,922.7 896.8,922.0 898.5,921.3 900.2,921.1 901.9,922.1 903.6,924.7 905.3,921.4 907.0,921.0 908.7,922.5 910.4,922.9 912.1,922.8 913.8,921.6 915.5,921.0 917.2,921.2 918.9,921.1 920.6,920.8 922.3,919.6 924.0,920.1 925.7,921.3 927.4,922.9 929.1,921.7 930.8,922.0 932.5,922.4 934.2,922.3 935.9,923.0 937.6,920.4 939.3,922.6 941.0,920.1 942.7,920.9 944.4,920.9 946.1,922.3 947.8,921.9 949.5,921.6 951.2,920.9 952.9,922.7 954.6,921.8 956.3,922.0 958.0,920.7 959.7,921.1 961.4,922.4 963.1,922.1 964.8,921.2 966.5,920.6 968.2,922.4 969.9,922.7 971.6,921.3 973.3,920.3 975.0,920.8 976.7,922.7 978.4,921.6 980.1,921.5 981.8,922.2 983.5,925.8 985.2,922.8 986.9,921.8 988.6,922.3 990.3,920.7 992.0,921.8 993.7,920.2 995.4,921.2 997.1,922.8 998.8,922.0 1000.5,921.2 1002.2,921.9 1003.9,920.5 1005.6,921.0 1007.3,921.6 1009.0,922.6 1010.7,921.7 1012.4,920.9 1014.1,921.7 1015.8,922.6 1017.5,921.6 1019.2,920.2 1020.9,920.2 1022.6,921.2 1024.3,921.5 1026.0,920.5 1027.7,921.3 1029.4,916.9 1031.1,922.3 1032.8,922.3 1034.5,922.0 1036.2,920.7 1037.9,920.8 1039.6,920.7 1041.3,922.4 1043.0,921.8 1044.7,920.1 1046.4,920.4 1048.1,921.2 1049.8,919.9 1051.5,920.5 1053.2,921.7 1054.9,925.3 1056.6,919.9 1058.3,921.9 1060.0,920.3 1061.7,920.3 1063.4,921.3 1065.1,921.2 1066.8,922.7 1068.5,920.7 1070.2,920.0 1071.9,919.7 1073.6,922.2 1075.3,920.0 1077.0,922.4 1078.7,920.4 1080.4,921.9 1082.1,923.0 1083.8,921.9 1085.5,921.5 1087.2,921.7 1088.9,920.2 1090.6,921.3 1092.3,922.3 1094.0,922.5 1095.7,921.2 1097.4,920.2 1099.1,922.1 1100.8,923.0 1102.5,921.1 1104.2,921.7 1105.9,918.3 1107.6,921.6 1109.3,921.2 1111.0,921.6 1112.7,922.8 1114.4,922.0 1116.1,917.3 1117.8,922.4 1119.5,921.7 1121.2,921.6 1122.9,921.6 1124.6,920.9 1126.3,921.8 1128.0,921.8 1129.7,922.9 1131.4,920.5 1133.1,921.7 1134.8,922.1 1136.5,921.9 1138.2,922.8 1139.9,921.4 1141.6,922.1 1143.3,922.5 1145.0,921.9 1146.7,921.0 1148.4,921.3 1150.1,921.7 1151.8,922.2 1153.5,921.8 1155.2,920.5 1156.9,922.5 1158.6,920.7 1160.3,922.7 1162.0,920.8 1163.7,922.0 1165.4,921.9 1167.1,922.9 1168.8,921.4 1170.5,921.3 1172.2,922.8 1173.9,919.5 1175.6,919.8 1177.3,921.5 1179.0,920.7 1180.7,922.7 1182.4,927.2 1184.1,922.4 1185.8,920.7 1187.5,922.7 1189.2,920.9 1190.9,920.1 1192.6,921.5 1194.3,921.5 1196.0,920.3 1197.7,919.5 1199.4,920.0 1201.1,921.0 1202.8,921.2 1204.5,922.9 1206.2,921.4 1207.9,921.5 1209.6,920.0 1211.3,922.0 1213.0,921.5 1214.7,919.8 1216.4,920.8 1218.1,920.1 1219.8,921.2 1221.5,922.1 1223.2,923.1 1224.9,921.9 1226.6,922.1 1228.3,921.5 1230.0,922.7 1231.7,920.9 1233.4,921.9 1235.1,921.0 1236.8,920.5 1238.5,920.7 1240.2,919.6 1241.9,922.3 1243.6,920.2 1245.3,921.4 1247.0,922.0 1248.7,920.3 1250.4,921.7 1252.1,922.8 1253.8,925.5 1255.5,922.1 1257.2,920.3 1258.9,919.7 1260.6,920.5 1262.3,921.6 1264.0,920.9 1265.7,920.3 1267.4,920.6 1269.1,919.8 1270.8,920.0 1272.5,920.3 1274.2,921.3 1275.9,922.1 1277.6,920.1 1279.3,920.4 1281.0,922.5 1282.7,920.3 1284.4,921.5 1286.1,920.4 1287.8,919.9 1289.5,921.6 1291.2,921.0 1292.9,920.1 1294.6,916.1 1296.3,922.6 1298.0,922.1 1299.7,916.8 1301.4,922.5 1303.1,922.7 1304.8,922.5 1306.5,920.9 1308.2,922.3 1309.9,921.7 1311.6,920.0 1313.3,922.0 1315.0,922.8 1316.7,920.4 1318.4,919.6 1320.1,920.7 1321.8,921.5 1323.5,921.4 1325.2,920.3 1326.9,922.3 1328.6,922.4 1330.3,922.9 1332.0,922.8 1333.7,920.5 1335.4,920.4 1337.1,921.1 1338.8,922.3 1340.5,923.1 1342.2,922.9 1343.9,921.4 1345.6,921.2 1347.3,921.4 1349.0,921.3 1350.7,921.6 1352.4,920.2 1354.1,922.2 1355.8,922.7 1357.5,922.5 1359.2,923.2 1360.9,922.0 1362.6,924.9 1364.3,921.0 1366.0,921.7 1367.7,921.3 1369.4,922.4 1371.1,921.6 1372.8,919.8 1374.5,920.4 1376.2,922.3 1377.9,920.3 1379.6,921.1 1381.3,922.8 1383.0,918.0 1384.7,920.7 1386.4,922.0 1388.1,920.8 1389.8,919.8 1391.5,922.2 1393.2,921.3 1394.9,921.5 1396.6,920.5 1398.3,921.8 1400.0,921.5 1401.7,922.3 1403.4,921.7 1405.1,920.9 1406.8,925.3 1408.5,919.8 1410.2,920.7 1411.9,921.3 1413.6,922.0 1415.3,921.5 1417.0,922.7 1418.7,921.9 1420.4,921.5 1422.1,921.2 1423.8,920.8 1425.5,922.6 1427.2,921.1 1428.9,924.3 1430.6,920.6 1432.3,919.6 1434.0,919.5 1435.7,919.4 1437.4,919.9 1439.1,920.9 1440.8,920.9 1442.5,920.2 1444.2,921.6 1445.9,922.8 1447.6,917.2 1449.3,921.9 1451.0,921.8 1452.7,922.5 1454.4,921.1 1456.1,920.3 1457.8,921.0 1459.5,921.6 1461.2,922.8 1462.9,922.0 1464.6,922.8 1466.3,922.0 1468.0,920.7 1469.7,920.5 1471.4,920.8 1473.1,916.3 1474.8,920.9 1476.5,921.2 1478.2,921.2 1479.9,922.8 1481.6,922.8 1483.3,920.4 1485.0,922.4 1486.7,921.7 1488.4,921.0 1490.1,920.6 1491.8,922.2 1493.5,922.2 1495.2,922.1 1496.9,920.1 1498.6,920.3 1500.3,916.5 1502.0,921.9 1503.7,921.9 1505.4,921.1 1507.1,922.8 1508.8,922.8 1510.5,921.4 1512.2,919.9 1513.9,920.1 1515.6,920.6 1517.3,921.8 1519.0,922.1 1520.7,922.2 1522.4,921.3 1524.1,920.2 1525.8,920.8 1527.5,922.1 1529.2,922.9 1530.9,922.2 1532.6,922.0 1534.3,922.6 1536.0,922.1 1537.7,920.6 1539.4,921.6 1541.1,922.7 1542.8,922.6 1544.5,921.9 1546.2,920.4 1547.9,919.6 1549.6,920.0 1551.3,920.7 1553.0,919.6 1554.7,919.4 1556.4,921.7 1558.1,921.6 1559.8,920.6 1561.5,921.2 1563.2,920.3 1564.9,919.6 1566.6,924.8 1568.3,919.8 1570.0,921.4 1571.7,920.4 1573.4,922.4 1575.1,922.5 1576.8,920.5 1578.5,920.0 1580.2,920.3 1581.9,921.3 1583.6,922.2 1585.3,920.3 1587.0,921.8 1588.7,922.9 1590.4,920.8 1592.1,920.4 1593.8,924.3 1595.5,920.5 1597.2,921.9 1598.9,922.6 1600.6,922.2 1602.3,922.9 1604.0,921.7 1605.7,920.4 1607.4,920.2 1609.1,920.8 1610.8,920.6 1612.5,920.6 1614.2,920.8 1615.9,920.6 1617.6,921.2 1619.3,920.6 1621.0,919.9 1622.7,921.7 1624.4,921.9 1626.1,920.4 1627.8,920.3 1629.5,920.5 1631.2,921.0 1632.9,920.1 1634.6,920.8 1636.3,920.1 1638.0,921.6 1639.7,919.9 1641.4,922.4 1643.1,922.3 1644.8,922.9 1646.5,922.8 1648.2,922.7 1649.9,922.1 1651.6,921.1 1653.0,927.7 1657.0,920.0 1662.0,917.4 1668.0,918.0 1672.0,916.0 1677.0,917.0 1684.0,937.4 1693.0,945.7 1697.4,934.5 1704.0,933.0 1710.7,934.5 1715.0,939.0 1715.5,1259.3 1817.2,1259.3 1820.6,1244.9 1822.0,1100.0 1823.8,872.5 1825.9,919.7 1836.0,910.9 1842.0,907.3 1852.4,910.3 1854.5,900.5 1858.3,916.8 1860.0,918.8 1863.0,919.3 1866.0,917.9 1869.0,917.2 1872.0,918.2 1875.0,918.5 1878.0,918.6 1881.0,918.0 1884.0,918.2 1887.0,918.3 1890.0,918.3 1893.0,917.6 1896.0,917.6 1899.0,917.6 1902.0,918.2 1905.0,919.0 1908.0,919.4 1911.0,918.8 1914.0,918.4 1917.0,917.8 1920.0,917.0 1923.0,916.6 1926.0,917.2 1929.0,917.2 1932.0,917.4 1935.0,918.4 1938.0,918.2 1941.0,918.2 1944.0,917.7 1947.0,917.0 1950.0,917.1 1953.0,916.9 1956.0,917.4 1959.0,918.6 1962.0,918.6 1965.0,917.8 1968.0,918.6 1971.0,918.9 1974.0,918.9 1977.0,919.2 1980.0,919.1 1983.0,919.2 1986.0,918.4 1989.0,919.1 1992.0,919.4 1995.0,918.2 1998.0,918.6 2001.0,918.7 2004.0,918.3 2007.0,918.2 2010.0,918.1 2013.0,918.8 2016.0,918.5 2019.0,918.8 2022.0,918.2 2025.0,918.8 2028.0,919.2 2031.0,918.6 2034.0,918.4 2037.0,919.0 2040.0,919.0 2043.0,918.5 2046.0,917.8 2049.0,917.6 2052.0,918.1 2055.0,917.5 2058.0,918.4 2061.0,917.8 2064.0,918.6 2067.0,918.0 2070.0,918.8 2073.0,918.8 2076.0,918.5 2079.0,918.3 2082.0,918.4 2085.0,918.4 2088.0,917.9 2091.0,917.4 2094.0,917.7 2097.0,918.6 2100.0,918.6 2102.0,918.5 2115.0,924.7 2116.0,923.5 2119.0,923.8 2122.0,923.7 2125.0,924.0 2128.0,924.2 2131.0,923.3 2134.0,922.8 2137.0,923.9 2140.0,923.5 2143.0,923.3 2146.0,924.5 2149.0,924.2 2152.0,924.7 2155.0,924.4 2158.0,924.4 2161.0,923.6 2164.0,924.0 2167.0,924.7 2170.0,924.4 2173.0,924.7 2176.0,924.7 2179.0,923.6 2182.0,924.2 2185.0,924.3 2188.0,923.8 2191.0,923.0 2194.0,924.1 2197.0,924.0 2200.0,924.4 2203.0,924.9 2206.0,924.9 2209.0,925.2 2212.0,924.5 2213.0,923.3 2214,1260.3 172.6,1260.3" fill="url(#tg)" transform="translate(0,0)"/><polyline points="172.6,920.1 174.3,921.9 176.0,921.4 177.7,921.8 179.4,923.5 181.1,924.9 182.8,922.4 184.5,920.3 186.2,919.5 187.9,919.3 189.6,921.4 191.3,922.0 193.0,922.3 194.7,921.7 196.4,922.0 198.1,922.9 199.8,921.4 201.5,922.7 203.2,922.1 204.9,920.8 206.6,922.5 208.3,921.6 210.0,921.4 211.7,920.3 213.4,922.6 215.1,923.0 216.8,922.9 218.5,922.5 220.2,922.1 221.9,922.7 223.6,922.4 225.3,922.1 227.0,920.4 228.7,920.7 230.4,921.0 232.1,922.4 233.8,921.8 235.5,920.4 237.2,919.5 238.9,922.2 240.6,921.2 242.3,922.4 244.0,922.9 245.7,922.0 247.4,921.1 249.1,922.7 250.8,921.7 252.5,922.3 254.2,923.0 255.9,921.3 257.6,922.7 259.3,922.7 261.0,920.0 262.7,921.9 264.4,921.8 266.1,921.9 267.8,920.4 269.5,921.2 271.2,920.0 272.9,923.1 274.6,919.7 276.3,920.4 278.0,920.0 279.7,919.9 281.4,921.6 283.1,920.8 284.8,919.7 286.5,920.6 288.2,919.9 289.9,921.0 291.6,921.6 293.3,917.3 295.0,922.4 296.7,921.6 298.4,922.4 300.1,922.0 301.8,921.3 303.5,919.8 305.2,921.9 306.9,921.2 308.6,920.1 310.3,919.5 312.0,919.5 313.7,920.2 315.4,921.2 317.1,921.5 318.8,921.6 320.5,922.7 322.2,922.7 323.9,922.5 325.6,920.1 327.3,919.7 329.0,922.2 330.7,921.5 332.4,921.0 334.1,919.7 335.8,920.6 337.5,920.0 339.2,922.0 340.9,920.3 342.6,920.3 344.3,920.7 346.0,922.5 347.7,921.7 349.4,921.5 351.1,919.9 352.8,919.9 354.5,920.2 356.2,921.0 357.9,920.7 359.6,920.3 361.3,921.9 363.0,921.4 364.7,922.2 366.4,921.2 368.1,922.9 369.8,920.5 371.5,921.4 373.2,920.0 374.9,921.2 376.6,920.8 378.3,921.3 380.0,922.6 381.7,920.2 383.4,924.1 385.1,922.6 386.8,920.8 388.5,920.9 390.2,920.1 391.9,921.8 393.6,922.7 395.3,923.2 397.0,921.1 398.7,921.2 400.4,917.7 402.1,922.8 403.8,921.1 405.5,920.9 407.2,920.6 408.9,921.0 410.6,922.1 412.3,922.8 414.0,921.6 415.7,920.4 417.4,920.1 419.1,922.0 420.8,922.3 422.5,921.8 424.2,920.5 425.9,919.6 427.6,921.8 429.3,922.8 431.0,920.4 432.7,922.1 434.4,920.6 436.1,920.8 437.8,922.4 439.5,923.5 441.2,922.1 442.9,921.5 444.6,920.0 446.3,919.9 448.0,922.5 449.7,921.0 451.4,921.3 453.1,920.6 454.8,920.0 456.5,919.5 458.2,922.1 459.9,922.8 461.6,922.5 463.3,920.6 465.0,920.0 466.7,921.5 468.4,920.0 470.1,922.0 471.8,921.6 473.5,921.2 475.2,920.8 476.9,919.6 478.6,920.6 480.3,919.7 482.0,919.7 483.7,920.1 485.4,920.7 487.1,921.5 488.8,919.8 490.5,920.9 492.2,921.0 493.9,922.0 495.6,921.5 497.3,920.5 499.0,921.3 500.7,922.6 502.4,922.1 504.1,920.1 505.8,922.2 507.5,922.4 509.2,921.0 510.9,922.3 512.6,922.2 514.3,921.8 516.0,922.7 517.7,921.9 519.4,920.6 521.1,921.4 522.8,919.9 524.5,921.6 526.2,921.4 527.9,922.1 529.6,923.0 531.3,922.1 533.0,922.8 534.7,920.5 536.4,922.2 538.1,922.2 539.8,922.9 541.5,921.3 543.2,921.1 544.9,920.7 546.6,922.5 548.3,920.4 550.0,920.8 551.7,920.5 553.4,918.3 555.1,917.5 556.8,920.5 558.5,921.2 560.2,921.6 561.9,922.0 563.6,922.5 565.3,921.7 567.0,922.5 568.7,921.8 570.4,920.7 572.1,922.1 573.8,922.3 575.5,923.0 577.2,923.2 578.9,921.8 580.6,920.8 582.3,920.7 584.0,919.6 585.7,920.7 587.4,920.8 589.1,921.8 590.8,921.9 592.5,924.3 594.2,921.8 595.9,922.2 597.6,922.9 599.3,921.7 601.0,922.1 602.7,922.1 604.4,922.1 606.1,921.6 607.8,921.6 609.5,920.9 611.2,922.7 612.9,923.1 614.6,923.3 616.3,923.3 618.0,920.3 619.7,919.9 621.4,920.6 623.1,920.1 624.8,926.0 626.5,921.2 628.2,920.6 629.9,920.4 631.6,921.1 633.3,920.0 635.0,919.6 636.7,920.7 638.4,921.8 640.1,920.1 641.8,920.3 643.5,921.1 645.2,920.7 646.9,921.8 648.6,921.9 650.3,921.6 652.0,920.7 653.7,922.7 655.4,921.2 657.1,920.9 658.8,921.2 660.5,921.6 662.2,920.6 663.9,920.3 665.6,922.2 667.3,921.2 669.0,922.7 670.7,920.9 672.4,921.9 674.1,921.7 675.8,922.8 677.5,923.1 679.2,920.7 680.9,922.4 682.6,921.0 684.3,920.0 686.0,921.6 687.7,920.5 689.4,922.5 691.1,920.1 692.8,919.5 694.5,921.4 696.2,921.4 697.9,922.6 699.6,922.1 701.3,921.9 703.0,920.6 704.7,921.0 706.4,922.7 708.1,921.0 709.8,920.9 711.5,920.4 713.2,919.8 714.9,915.4 716.6,920.3 718.3,921.3 720.0,921.0 721.7,922.0 723.4,918.6 725.1,921.8 726.8,920.6 728.5,921.6 730.2,919.8 731.9,921.0 733.6,922.6 735.3,921.4 737.0,921.3 738.7,920.6 740.4,920.1 742.1,920.5 743.8,920.3 745.5,920.2 747.2,922.0 748.9,921.2 750.6,921.7 752.3,922.7 754.0,921.8 755.7,921.5 757.4,920.0 759.1,921.3 760.8,919.9 762.5,919.7 764.2,919.9 765.9,919.5 767.6,922.2 769.3,921.5 771.0,920.8 772.7,919.7 774.4,922.2 776.1,922.8 777.8,922.4 779.5,920.8 781.2,920.5 782.9,919.7 784.6,921.7 786.3,921.0 788.0,921.8 789.7,922.5 791.4,920.7 793.1,921.2 794.8,922.5 796.5,920.4 798.2,921.2 799.9,922.4 801.6,925.6 803.3,920.4 805.0,920.5 806.7,919.9 808.4,920.3 810.1,921.2 811.8,920.7 813.5,921.9 815.2,919.9 816.9,920.4 818.6,922.0 820.3,921.3 822.0,921.2 823.7,922.0 825.4,922.7 827.1,921.9 828.8,920.0 830.5,922.1 832.2,920.7 833.9,920.6 835.6,922.1 837.3,920.9 839.0,920.7 840.7,919.6 842.4,920.0 844.1,919.7 845.8,922.3 847.5,922.6 849.2,922.2 850.9,920.6 852.6,921.3 854.3,922.4 856.0,920.7 857.7,921.2 859.4,921.6 861.1,921.3 862.8,920.4 864.5,921.1 866.2,920.4 867.9,920.6 869.6,920.1 871.3,919.6 873.0,922.4 874.7,920.0 876.4,920.6 878.1,919.8 879.8,920.9 881.5,921.0 883.2,926.7 884.9,922.1 886.6,922.5 888.3,923.2 890.0,922.7 891.7,923.2 893.4,921.5 895.1,922.7 896.8,922.0 898.5,921.3 900.2,921.1 901.9,922.1 903.6,924.7 905.3,921.4 907.0,921.0 908.7,922.5 910.4,922.9 912.1,922.8 913.8,921.6 915.5,921.0 917.2,921.2 918.9,921.1 920.6,920.8 922.3,919.6 924.0,920.1 925.7,921.3 927.4,922.9 929.1,921.7 930.8,922.0 932.5,922.4 934.2,922.3 935.9,923.0 937.6,920.4 939.3,922.6 941.0,920.1 942.7,920.9 944.4,920.9 946.1,922.3 947.8,921.9 949.5,921.6 951.2,920.9 952.9,922.7 954.6,921.8 956.3,922.0 958.0,920.7 959.7,921.1 961.4,922.4 963.1,922.1 964.8,921.2 966.5,920.6 968.2,922.4 969.9,922.7 971.6,921.3 973.3,920.3 975.0,920.8 976.7,922.7 978.4,921.6 980.1,921.5 981.8,922.2 983.5,925.8 985.2,922.8 986.9,921.8 988.6,922.3 990.3,920.7 992.0,921.8 993.7,920.2 995.4,921.2 997.1,922.8 998.8,922.0 1000.5,921.2 1002.2,921.9 1003.9,920.5 1005.6,921.0 1007.3,921.6 1009.0,922.6 1010.7,921.7 1012.4,920.9 1014.1,921.7 1015.8,922.6 1017.5,921.6 1019.2,920.2 1020.9,920.2 1022.6,921.2 1024.3,921.5 1026.0,920.5 1027.7,921.3 1029.4,916.9 1031.1,922.3 1032.8,922.3 1034.5,922.0 1036.2,920.7 1037.9,920.8 1039.6,920.7 1041.3,922.4 1043.0,921.8 1044.7,920.1 1046.4,920.4 1048.1,921.2 1049.8,919.9 1051.5,920.5 1053.2,921.7 1054.9,925.3 1056.6,919.9 1058.3,921.9 1060.0,920.3 1061.7,920.3 1063.4,921.3 1065.1,921.2 1066.8,922.7 1068.5,920.7 1070.2,920.0 1071.9,919.7 1073.6,922.2 1075.3,920.0 1077.0,922.4 1078.7,920.4 1080.4,921.9 1082.1,923.0 1083.8,921.9 1085.5,921.5 1087.2,921.7 1088.9,920.2 1090.6,921.3 1092.3,922.3 1094.0,922.5 1095.7,921.2 1097.4,920.2 1099.1,922.1 1100.8,923.0 1102.5,921.1 1104.2,921.7 1105.9,918.3 1107.6,921.6 1109.3,921.2 1111.0,921.6 1112.7,922.8 1114.4,922.0 1116.1,917.3 1117.8,922.4 1119.5,921.7 1121.2,921.6 1122.9,921.6 1124.6,920.9 1126.3,921.8 1128.0,921.8 1129.7,922.9 1131.4,920.5 1133.1,921.7 1134.8,922.1 1136.5,921.9 1138.2,922.8 1139.9,921.4 1141.6,922.1 1143.3,922.5 1145.0,921.9 1146.7,921.0 1148.4,921.3 1150.1,921.7 1151.8,922.2 1153.5,921.8 1155.2,920.5 1156.9,922.5 1158.6,920.7 1160.3,922.7 1162.0,920.8 1163.7,922.0 1165.4,921.9 1167.1,922.9 1168.8,921.4 1170.5,921.3 1172.2,922.8 1173.9,919.5 1175.6,919.8 1177.3,921.5 1179.0,920.7 1180.7,922.7 1182.4,927.2 1184.1,922.4 1185.8,920.7 1187.5,922.7 1189.2,920.9 1190.9,920.1 1192.6,921.5 1194.3,921.5 1196.0,920.3 1197.7,919.5 1199.4,920.0 1201.1,921.0 1202.8,921.2 1204.5,922.9 1206.2,921.4 1207.9,921.5 1209.6,920.0 1211.3,922.0 1213.0,921.5 1214.7,919.8 1216.4,920.8 1218.1,920.1 1219.8,921.2 1221.5,922.1 1223.2,923.1 1224.9,921.9 1226.6,922.1 1228.3,921.5 1230.0,922.7 1231.7,920.9 1233.4,921.9 1235.1,921.0 1236.8,920.5 1238.5,920.7 1240.2,919.6 1241.9,922.3 1243.6,920.2 1245.3,921.4 1247.0,922.0 1248.7,920.3 1250.4,921.7 1252.1,922.8 1253.8,925.5 1255.5,922.1 1257.2,920.3 1258.9,919.7 1260.6,920.5 1262.3,921.6 1264.0,920.9 1265.7,920.3 1267.4,920.6 1269.1,919.8 1270.8,920.0 1272.5,920.3 1274.2,921.3 1275.9,922.1 1277.6,920.1 1279.3,920.4 1281.0,922.5 1282.7,920.3 1284.4,921.5 1286.1,920.4 1287.8,919.9 1289.5,921.6 1291.2,921.0 1292.9,920.1 1294.6,916.1 1296.3,922.6 1298.0,922.1 1299.7,916.8 1301.4,922.5 1303.1,922.7 1304.8,922.5 1306.5,920.9 1308.2,922.3 1309.9,921.7 1311.6,920.0 1313.3,922.0 1315.0,922.8 1316.7,920.4 1318.4,919.6 1320.1,920.7 1321.8,921.5 1323.5,921.4 1325.2,920.3 1326.9,922.3 1328.6,922.4 1330.3,922.9 1332.0,922.8 1333.7,920.5 1335.4,920.4 1337.1,921.1 1338.8,922.3 1340.5,923.1 1342.2,922.9 1343.9,921.4 1345.6,921.2 1347.3,921.4 1349.0,921.3 1350.7,921.6 1352.4,920.2 1354.1,922.2 1355.8,922.7 1357.5,922.5 1359.2,923.2 1360.9,922.0 1362.6,924.9 1364.3,921.0 1366.0,921.7 1367.7,921.3 1369.4,922.4 1371.1,921.6 1372.8,919.8 1374.5,920.4 1376.2,922.3 1377.9,920.3 1379.6,921.1 1381.3,922.8 1383.0,918.0 1384.7,920.7 1386.4,922.0 1388.1,920.8 1389.8,919.8 1391.5,922.2 1393.2,921.3 1394.9,921.5 1396.6,920.5 1398.3,921.8 1400.0,921.5 1401.7,922.3 1403.4,921.7 1405.1,920.9 1406.8,925.3 1408.5,919.8 1410.2,920.7 1411.9,921.3 1413.6,922.0 1415.3,921.5 1417.0,922.7 1418.7,921.9 1420.4,921.5 1422.1,921.2 1423.8,920.8 1425.5,922.6 1427.2,921.1 1428.9,924.3 1430.6,920.6 1432.3,919.6 1434.0,919.5 1435.7,919.4 1437.4,919.9 1439.1,920.9 1440.8,920.9 1442.5,920.2 1444.2,921.6 1445.9,922.8 1447.6,917.2 1449.3,921.9 1451.0,921.8 1452.7,922.5 1454.4,921.1 1456.1,920.3 1457.8,921.0 1459.5,921.6 1461.2,922.8 1462.9,922.0 1464.6,922.8 1466.3,922.0 1468.0,920.7 1469.7,920.5 1471.4,920.8 1473.1,916.3 1474.8,920.9 1476.5,921.2 1478.2,921.2 1479.9,922.8 1481.6,922.8 1483.3,920.4 1485.0,922.4 1486.7,921.7 1488.4,921.0 1490.1,920.6 1491.8,922.2 1493.5,922.2 1495.2,922.1 1496.9,920.1 1498.6,920.3 1500.3,916.5 1502.0,921.9 1503.7,921.9 1505.4,921.1 1507.1,922.8 1508.8,922.8 1510.5,921.4 1512.2,919.9 1513.9,920.1 1515.6,920.6 1517.3,921.8 1519.0,922.1 1520.7,922.2 1522.4,921.3 1524.1,920.2 1525.8,920.8 1527.5,922.1 1529.2,922.9 1530.9,922.2 1532.6,922.0 1534.3,922.6 1536.0,922.1 1537.7,920.6 1539.4,921.6 1541.1,922.7 1542.8,922.6 1544.5,921.9 1546.2,920.4 1547.9,919.6 1549.6,920.0 1551.3,920.7 1553.0,919.6 1554.7,919.4 1556.4,921.7 1558.1,921.6 1559.8,920.6 1561.5,921.2 1563.2,920.3 1564.9,919.6 1566.6,924.8 1568.3,919.8 1570.0,921.4 1571.7,920.4 1573.4,922.4 1575.1,922.5 1576.8,920.5 1578.5,920.0 1580.2,920.3 1581.9,921.3 1583.6,922.2 1585.3,920.3 1587.0,921.8 1588.7,922.9 1590.4,920.8 1592.1,920.4 1593.8,924.3 1595.5,920.5 1597.2,921.9 1598.9,922.6 1600.6,922.2 1602.3,922.9 1604.0,921.7 1605.7,920.4 1607.4,920.2 1609.1,920.8 1610.8,920.6 1612.5,920.6 1614.2,920.8 1615.9,920.6 1617.6,921.2 1619.3,920.6 1621.0,919.9 1622.7,921.7 1624.4,921.9 1626.1,920.4 1627.8,920.3 1629.5,920.5 1631.2,921.0 1632.9,920.1 1634.6,920.8 1636.3,920.1 1638.0,921.6 1639.7,919.9 1641.4,922.4 1643.1,922.3 1644.8,922.9 1646.5,922.8 1648.2,922.7 1649.9,922.1 1651.6,921.1 1653.0,927.7 1657.0,920.0 1662.0,917.4 1668.0,918.0 1672.0,916.0 1677.0,917.0 1684.0,937.4 1693.0,945.7 1697.4,934.5 1704.0,933.0 1710.7,934.5 1715.0,939.0 1715.5,1259.3 1817.2,1259.3 1820.6,1244.9 1822.0,1100.0 1823.8,872.5 1825.9,919.7 1836.0,910.9 1842.0,907.3 1852.4,910.3 1854.5,900.5 1858.3,916.8 1860.0,918.8 1863.0,919.3 1866.0,917.9 1869.0,917.2 1872.0,918.2 1875.0,918.5 1878.0,918.6 1881.0,918.0 1884.0,918.2 1887.0,918.3 1890.0,918.3 1893.0,917.6 1896.0,917.6 1899.0,917.6 1902.0,918.2 1905.0,919.0 1908.0,919.4 1911.0,918.8 1914.0,918.4 1917.0,917.8 1920.0,917.0 1923.0,916.6 1926.0,917.2 1929.0,917.2 1932.0,917.4 1935.0,918.4 1938.0,918.2 1941.0,918.2 1944.0,917.7 1947.0,917.0 1950.0,917.1 1953.0,916.9 1956.0,917.4 1959.0,918.6 1962.0,918.6 1965.0,917.8 1968.0,918.6 1971.0,918.9 1974.0,918.9 1977.0,919.2 1980.0,919.1 1983.0,919.2 1986.0,918.4 1989.0,919.1 1992.0,919.4 1995.0,918.2 1998.0,918.6 2001.0,918.7 2004.0,918.3 2007.0,918.2 2010.0,918.1 2013.0,918.8 2016.0,918.5 2019.0,918.8 2022.0,918.2 2025.0,918.8 2028.0,919.2 2031.0,918.6 2034.0,918.4 2037.0,919.0 2040.0,919.0 2043.0,918.5 2046.0,917.8 2049.0,917.6 2052.0,918.1 2055.0,917.5 2058.0,918.4 2061.0,917.8 2064.0,918.6 2067.0,918.0 2070.0,918.8 2073.0,918.8 2076.0,918.5 2079.0,918.3 2082.0,918.4 2085.0,918.4 2088.0,917.9 2091.0,917.4 2094.0,917.7 2097.0,918.6 2100.0,918.6 2102.0,918.5 2115.0,924.7 2116.0,923.5 2119.0,923.8 2122.0,923.7 2125.0,924.0 2128.0,924.2 2131.0,923.3 2134.0,922.8 2137.0,923.9 2140.0,923.5 2143.0,923.3 2146.0,924.5 2149.0,924.2 2152.0,924.7 2155.0,924.4 2158.0,924.4 2161.0,923.6 2164.0,924.0 2167.0,924.7 2170.0,924.4 2173.0,924.7 2176.0,924.7 2179.0,923.6 2182.0,924.2 2185.0,924.3 2188.0,923.8 2191.0,923.0 2194.0,924.1 2197.0,924.0 2200.0,924.4 2203.0,924.9 2206.0,924.9 2209.0,925.2 2212.0,924.5 2213.0,923.3" fill="none" stroke="#56a64b" stroke-width="4.4" stroke-linejoin="round"/></svg>
<div class="t" style="top:1245.29px;left:88.76px;font-size:26px;color:#24292e;letter-spacing:0.550px;">0 kg/h</div>
<div class="t" style="top:1127.99px;left:58.80px;font-size:26px;color:#24292e;letter-spacing:0.550px;">100 kg/h</div>
<div class="t" style="top:1010.69px;left:58.80px;font-size:26px;color:#24292e;letter-spacing:0.550px;">200 kg/h</div>
<div class="t" style="top:893.39px;left:58.80px;font-size:26px;color:#24292e;letter-spacing:0.550px;">300 kg/h</div>
<div class="t" style="top:1274.69px;left:138.44px;font-size:26px;color:#24292e;letter-spacing:0.800px;">00:00</div>
<div class="t" style="top:1274.69px;left:308.65px;font-size:26px;color:#24292e;letter-spacing:0.800px;">02:00</div>
<div class="t" style="top:1274.69px;left:478.87px;font-size:26px;color:#24292e;letter-spacing:0.800px;">04:00</div>
<div class="t" style="top:1274.69px;left:649.10px;font-size:26px;color:#24292e;letter-spacing:0.800px;">06:00</div>
<div class="t" style="top:1274.69px;left:819.32px;font-size:26px;color:#24292e;letter-spacing:0.800px;">08:00</div>
<div class="t" style="top:1274.69px;left:989.08px;font-size:26px;color:#24292e;letter-spacing:0.800px;">10:00</div>
<div class="t" style="top:1274.69px;left:1159.30px;font-size:26px;color:#24292e;letter-spacing:0.800px;">12:00</div>
<div class="t" style="top:1274.69px;left:1329.52px;font-size:26px;color:#24292e;letter-spacing:0.800px;">14:00</div>
<div class="t" style="top:1274.69px;left:1499.74px;font-size:26px;color:#24292e;letter-spacing:0.800px;">16:00</div>
<div class="t" style="top:1274.69px;left:1669.96px;font-size:26px;color:#24292e;letter-spacing:0.800px;">18:00</div>
<div class="t" style="top:1274.69px;left:1840.50px;font-size:26px;color:#24292e;letter-spacing:0.800px;">20:00</div>
<div class="t" style="top:1274.69px;left:2010.72px;font-size:26px;color:#24292e;letter-spacing:0.800px;">22:00</div>
<div class="t" style="top:819.04px;left:2288.70px;font-size:25px;color:#1f62e0;-webkit-text-stroke:0.55px #1f62e0;letter-spacing:1.125px;">Name</div>
<div class="t" style="top:819.04px;left:2485.50px;font-size:25px;color:#1f62e0;-webkit-text-stroke:0.55px #1f62e0;">Last</div>
<div class="t" style="top:819.04px;left:2621.75px;font-size:25px;color:#1f62e0;-webkit-text-stroke:0.55px #1f62e0;">Min</div>
<div class="t" style="top:819.04px;left:2739.50px;font-size:25px;color:#1f62e0;-webkit-text-stroke:0.55px #1f62e0;">Max</div>
<div style="position:absolute;left:2230px;top:856px;width:600px;height:2px;background:#e4e5e7"></div>
<div style="position:absolute;left:2246px;top:876px;width:28px;height:8px;background:#56a64b;border-radius:4px"></div>
<div class="t" style="top:866.39px;left:2288.62px;font-size:26px;color:#24292e;letter-spacing:0.172px;">Durchsatz</div>
<div class="t" style="top:866.39px;left:2439.70px;font-size:26px;color:#24292e;letter-spacing:0.407px;">287 kg/h</div>
<div class="t" style="top:866.39px;left:2590.71px;font-size:26px;color:#24292e;">0 kg/h</div>
<div class="t" style="top:866.39px;left:2693.09px;font-size:26px;color:#24292e;letter-spacing:0.680px;">330 kg/h</div>
<div style="position:absolute;left:2230px;top:904px;width:600px;height:2px;background:#e4e5e7"></div>
<div style="position:absolute;left:32px;top:1336px;width:1396px;height:588px;border:2px solid #e1e2e4;border-radius:4px;background:#fff"></div>
<div class="t" style="top:1354.61px;left:48.60px;font-size:30px;color:#24292e;-webkit-text-stroke:0.66px #24292e;letter-spacing:0.402px;">Line Speed (Actual vs Setpoint)</div>
<svg style="position:absolute;left:512.8px;top:1353.8999999999999px;" width="31" height="31" viewBox="0 0 31 31"><circle cx="15.5" cy="15.5" r="11.7" fill="none" stroke="#4c5055" stroke-width="2.7"/><line x1="15.5" y1="15.9" x2="15.5" y2="20.9" stroke="#4c5055" stroke-width="2.8" stroke-linecap="round"/><circle cx="15.5" cy="11.1" r="1.7" fill="#4c5055"/></svg>
<svg style="position:absolute;left:0;top:0" width="2880" height="2000"><rect x="185.4" y="1435" width="1" height="297.29999999999995" fill="#dfe0e2"/><rect x="337.0" y="1435" width="1" height="297.29999999999995" fill="#dfe0e2"/><rect x="488.5" y="1435" width="1" height="297.29999999999995" fill="#dfe0e2"/><rect x="640.1" y="1435" width="1" height="297.29999999999995" fill="#dfe0e2"/><rect x="791.6" y="1435" width="1" height="297.29999999999995" fill="#dfe0e2"/><rect x="943.1" y="1435" width="1" height="297.29999999999995" fill="#dfe0e2"/><rect x="1094.7" y="1435" width="1" height="297.29999999999995" fill="#dfe0e2"/><rect x="1246.3" y="1435" width="1" height="297.29999999999995" fill="#dfe0e2"/><rect x="185.9" y="1723.8" width="1212.1" height="1" fill="#dfe0e2"/><rect x="185.9" y="1612.6" width="1212.1" height="1" fill="#dfe0e2"/><rect x="185.9" y="1501.4" width="1212.1" height="1" fill="#dfe0e2"/><polygon points="185.9,1575.0 696.0,1575.0 698.9,1671.0 718.3,1671.0 720.6,1654.0 723.4,1614.0 725.0,1575.0 1099.7,1575.0 1102.5,1724.0 1110.0,1724.0 1111.7,1660.8 1115.0,1724.0 1161.7,1724.0 1163.7,1683.3 1166.7,1660.0 1179.2,1660.0 1183.3,1608.3 1184.2,1475.8 1200.8,1475.8 1202.0,1477.0 1325.0,1477.0 1327.5,1480.8 1396.0,1480.8 1396,1724.3 185.9,1724.3" fill="#3274d9" fill-opacity="0.1"/><polyline points="185.9,1575.0 696.0,1575.0 698.9,1671.0 718.3,1671.0 720.6,1654.0 723.4,1614.0 725.0,1575.0 1099.7,1575.0 1102.5,1724.0 1110.0,1724.0 1111.7,1660.8 1115.0,1724.0 1161.7,1724.0 1163.7,1683.3 1166.7,1660.0 1179.2,1660.0 1183.3,1608.3 1184.2,1475.8 1200.8,1475.8 1202.0,1477.0 1325.0,1477.0 1327.5,1480.8 1396.0,1480.8" fill="none" stroke="#3274d9" stroke-width="4.2" stroke-linejoin="round"/><polyline points="185.9,1575.0 1078.3,1575.0 1078.3,1478.7 1326.7,1478.7 1328.5,1480.8 1396.0,1480.8" fill="none" stroke="#ff780a" stroke-width="4.2" stroke-dasharray="10 10" stroke-dashoffset="0"/></svg>
<div class="t" style="top:1709.29px;left:84.13px;font-size:26px;color:#24292e;">0 m/min</div>
<div class="t" style="top:1598.11px;left:69.70px;font-size:26px;color:#24292e;">50 m/min</div>
<div class="t" style="top:1486.93px;left:55.27px;font-size:26px;color:#24292e;">100 m/min</div>
<div class="t" style="top:1739.49px;left:151.13px;font-size:26px;color:#24292e;letter-spacing:1.100px;">00:00</div>
<div class="t" style="top:1739.49px;left:302.69px;font-size:26px;color:#24292e;letter-spacing:1.100px;">03:00</div>
<div class="t" style="top:1739.49px;left:454.24px;font-size:26px;color:#24292e;letter-spacing:1.100px;">06:00</div>
<div class="t" style="top:1739.49px;left:605.79px;font-size:26px;color:#24292e;letter-spacing:1.100px;">09:00</div>
<div class="t" style="top:1739.49px;left:756.88px;font-size:26px;color:#24292e;letter-spacing:1.100px;">12:00</div>
<div class="t" style="top:1739.49px;left:908.43px;font-size:26px;color:#24292e;letter-spacing:1.100px;">15:00</div>
<div class="t" style="top:1739.49px;left:1059.98px;font-size:26px;color:#24292e;letter-spacing:1.100px;">18:00</div>
<div class="t" style="top:1739.49px;left:1211.86px;font-size:26px;color:#24292e;letter-spacing:1.100px;">21:00</div>
<div class="t" style="top:1775.34px;left:108.40px;font-size:25px;color:#1f62e0;-webkit-text-stroke:0.55px #1f62e0;letter-spacing:1.125px;">Name</div>
<div class="t" style="top:1775.34px;left:1320.40px;font-size:25px;color:#1f62e0;-webkit-text-stroke:0.55px #1f62e0;letter-spacing:1.200px;">Last</div>
<div style="position:absolute;left:50px;top:1812px;width:1364px;height:2px;background:#e4e5e7"></div>
<div style="position:absolute;left:66px;top:1832px;width:28px;height:8px;background:#3274d9;border-radius:4px"></div>
<div class="t" style="top:1822.49px;left:110.40px;font-size:26px;color:#24292e;letter-spacing:0.243px;">Abzugsgeschwindigkeit</div>
<div class="t" style="top:1822.49px;left:1276.05px;font-size:26px;color:#24292e;letter-spacing:0.152px;">109 m/min</div>
<div style="position:absolute;left:50px;top:1859px;width:1364px;height:2px;background:#e4e5e7"></div>
<div style="position:absolute;left:66px;top:1880px;width:12px;height:8px;background:#ff780a"></div>
<div style="position:absolute;left:82px;top:1880px;width:12px;height:8px;background:#ff780a"></div>
<div class="t" style="top:1870.49px;left:110.40px;font-size:26px;color:#24292e;letter-spacing:0.164px;">Abzugsgeschwindigkeit (Soll)</div>
<div class="t" style="top:1870.49px;left:1276.05px;font-size:26px;color:#24292e;letter-spacing:0.152px;">109 m/min</div>
<div style="position:absolute;left:50px;top:1907px;width:1364px;height:2px;background:#e4e5e7"></div>
<div style="position:absolute;left:1448px;top:1336px;width:1396px;height:588px;border:2px solid #e1e2e4;border-radius:4px;background:#fff"></div>
<div class="t" style="top:1354.61px;left:1465.60px;font-size:30px;color:#24292e;-webkit-text-stroke:0.66px #24292e;letter-spacing:0.674px;">Extruder Throughputs</div>
<svg style="position:absolute;left:1798.6px;top:1353.8999999999999px;" width="31" height="31" viewBox="0 0 31 31"><circle cx="15.5" cy="15.5" r="11.7" fill="none" stroke="#4c5055" stroke-width="2.7"/><line x1="15.5" y1="15.9" x2="15.5" y2="20.9" stroke="#4c5055" stroke-width="2.8" stroke-linecap="round"/><circle cx="15.5" cy="11.1" r="1.7" fill="#4c5055"/></svg>
<div style="position:absolute;left:0;top:0;width:2880px;height:1926px;overflow:hidden"><svg style="position:absolute;left:0;top:0" width="2880" height="2000"><rect x="1587.5" y="1434" width="1" height="268" fill="#dfe0e2"/><rect x="1740.9" y="1434" width="1" height="268" fill="#dfe0e2"/><rect x="1894.3" y="1434" width="1" height="268" fill="#dfe0e2"/><rect x="2047.8" y="1434" width="1" height="268" fill="#dfe0e2"/><rect x="2201.2" y="1434" width="1" height="268" fill="#dfe0e2"/><rect x="2354.6" y="1434" width="1" height="268" fill="#dfe0e2"/><rect x="2508.0" y="1434" width="1" height="268" fill="#dfe0e2"/><rect x="2661.4" y="1434" width="1" height="268" fill="#dfe0e2"/><rect x="1588" y="1693.5" width="1226" height="1" fill="#dfe0e2"/><rect x="1588" y="1606.9" width="1226" height="1" fill="#dfe0e2"/><rect x="1588" y="1520.4" width="1226" height="1" fill="#dfe0e2"/><rect x="1588" y="1433.8" width="1226" height="1" fill="#dfe0e2"/><polyline points="1588.0,1672.0 1594.0,1672.0 1600.0,1672.2 1606.0,1672.1 1612.0,1672.1 1618.0,1672.1 1624.0,1671.9 1630.0,1671.9 1636.0,1672.0 1642.0,1672.2 1648.0,1671.9 1654.0,1671.8 1660.0,1671.7 1666.0,1672.0 1672.0,1672.1 1678.0,1671.8 1684.0,1672.1 1690.0,1672.3 1696.0,1672.2 1702.0,1672.2 1708.0,1671.9 1714.0,1671.7 1720.0,1671.9 1726.0,1671.7 1732.0,1671.7 1738.0,1671.7 1744.0,1671.6 1750.0,1671.8 1756.0,1671.8 1762.0,1672.1 1768.0,1672.1 1774.0,1672.1 1780.0,1672.1 1786.0,1672.1 1792.0,1672.0 1798.0,1671.9 1804.0,1672.2 1810.0,1672.4 1816.0,1672.4 1822.0,1672.3 1828.0,1672.1 1834.0,1671.9 1840.0,1671.8 1846.0,1671.7 1852.0,1672.0 1858.0,1671.9 1864.0,1672.1 1870.0,1672.0 1876.0,1672.2 1882.0,1672.3 1888.0,1671.9 1894.0,1671.8 1900.0,1672.1 1906.0,1672.0 1912.0,1672.3 1918.0,1672.1 1924.0,1671.8 1930.0,1672.0 1936.0,1672.1 1942.0,1672.0 1948.0,1671.8 1954.0,1671.8 1960.0,1672.1 1966.0,1672.2 1972.0,1671.9 1978.0,1671.8 1984.0,1671.7 1990.0,1671.6 1996.0,1671.9 2002.0,1671.8 2008.0,1671.9 2014.0,1671.9 2020.0,1671.8 2026.0,1672.0 2032.0,1671.8 2038.0,1672.0 2044.0,1671.8 2050.0,1671.8 2056.0,1671.8 2062.0,1671.8 2068.0,1672.1 2074.0,1672.2 2080.0,1672.0 2086.0,1672.2 2092.0,1672.0 2098.0,1671.9 2104.0,1672.1 2110.0,1672.1 2116.0,1671.9 2122.0,1672.2 2128.0,1672.0 2134.0,1671.9 2140.0,1672.1 2146.0,1671.9 2152.0,1671.9 2158.0,1671.7 2164.0,1671.6 2170.0,1671.8 2176.0,1671.8 2182.0,1671.9 2188.0,1671.9 2194.0,1671.9 2200.0,1672.2 2206.0,1672.1 2212.0,1672.1 2218.0,1672.2 2224.0,1672.0 2230.0,1671.8 2236.0,1672.1 2242.0,1672.2 2248.0,1672.0 2254.0,1671.8 2260.0,1672.0 2266.0,1672.2 2272.0,1672.0 2278.0,1672.2 2284.0,1672.3 2290.0,1672.2 2296.0,1672.1 2302.0,1671.8 2308.0,1671.7 2314.0,1672.1 2320.0,1671.9 2326.0,1672.0 2332.0,1671.9 2338.0,1672.1 2344.0,1672.1 2350.0,1672.0 2356.0,1671.8 2362.0,1672.0 2368.0,1671.8 2374.0,1671.7 2380.0,1671.9 2386.0,1672.1 2392.0,1672.1 2398.0,1672.0 2404.0,1672.2 2410.0,1672.0 2416.0,1671.7 2422.0,1671.7 2428.0,1671.8 2434.0,1671.7 2440.0,1671.7 2446.0,1671.8 2452.0,1671.9 2458.0,1671.8 2464.0,1671.8 2470.0,1672.1 2476.0,1672.3 2482.0,1672.2 2488.0,1672.2 2494.0,1672.2 2500.0,1671.9 2506.0,1671.7 2512.0,1672.0 2514.0,1694.0 2576.0,1694.0 2580.0,1662.3 2597.8,1662.3 2600.0,1669.8 2814.0,1669.8" fill="none" stroke="#56a64b" stroke-width="4.2" stroke-linejoin="round"/><polyline points="1588.0,1483.9 1589.7,1484.5 1591.4,1482.7 1593.1,1483.0 1594.8,1484.3 1596.5,1484.3 1598.2,1483.0 1599.9,1482.7 1601.6,1482.4 1603.3,1482.3 1605.0,1483.1 1606.7,1480.7 1608.4,1484.7 1610.1,1485.6 1611.8,1484.2 1613.5,1485.5 1615.2,1485.5 1616.9,1485.8 1618.6,1484.6 1620.3,1482.9 1622.0,1484.2 1623.7,1484.4 1625.4,1484.5 1627.1,1483.2 1628.8,1483.1 1630.5,1484.9 1632.2,1483.6 1633.9,1483.4 1635.6,1484.1 1637.3,1483.1 1639.0,1481.9 1640.7,1484.0 1642.4,1484.8 1644.1,1484.4 1645.8,1488.2 1647.5,1484.5 1649.2,1484.2 1650.9,1483.6 1652.6,1484.5 1654.3,1483.3 1656.0,1483.7 1657.7,1483.0 1659.4,1482.9 1661.1,1485.1 1662.8,1485.2 1664.5,1485.2 1666.2,1483.5 1667.9,1483.5 1669.6,1482.8 1671.3,1484.9 1673.0,1483.6 1674.7,1484.7 1676.4,1484.2 1678.1,1484.6 1679.8,1484.9 1681.5,1484.6 1683.2,1483.6 1684.9,1484.3 1686.6,1485.0 1688.3,1480.4 1690.0,1483.0 1691.7,1483.5 1693.4,1483.7 1695.1,1484.1 1696.8,1485.3 1698.5,1485.1 1700.2,1484.5 1701.9,1485.0 1703.6,1483.8 1705.3,1484.7 1707.0,1482.7 1708.7,1484.9 1710.4,1485.4 1712.1,1484.5 1713.8,1483.8 1715.5,1483.5 1717.2,1485.2 1718.9,1484.4 1720.6,1483.0 1722.3,1484.3 1724.0,1483.3 1725.7,1483.3 1727.4,1482.8 1729.1,1483.1 1730.8,1484.6 1732.5,1485.4 1734.2,1483.0 1735.9,1483.6 1737.6,1484.4 1739.3,1483.3 1741.0,1488.4 1742.7,1485.3 1744.4,1483.7 1746.1,1482.9 1747.8,1483.2 1749.5,1483.5 1751.2,1484.5 1752.9,1485.0 1754.6,1485.1 1756.3,1484.9 1758.0,1484.3 1759.7,1482.7 1761.4,1483.9 1763.1,1489.1 1764.8,1484.6 1766.5,1484.1 1768.2,1482.9 1769.9,1483.5 1771.6,1483.6 1773.3,1483.2 1775.0,1484.7 1776.7,1483.1 1778.4,1482.4 1780.1,1484.5 1781.8,1483.9 1783.5,1483.5 1785.2,1483.9 1786.9,1484.9 1788.6,1485.1 1790.3,1483.1 1792.0,1484.9 1793.7,1484.7 1795.4,1484.8 1797.1,1485.5 1798.8,1485.4 1800.5,1485.5 1802.2,1485.4 1803.9,1483.0 1805.6,1482.8 1807.3,1484.6 1809.0,1485.6 1810.7,1481.3 1812.4,1484.1 1814.1,1478.7 1815.8,1483.7 1817.5,1483.8 1819.2,1483.6 1820.9,1484.0 1822.6,1483.3 1824.3,1483.8 1826.0,1484.5 1827.7,1484.7 1829.4,1483.9 1831.1,1484.7 1832.8,1483.1 1834.5,1482.6 1836.2,1479.8 1837.9,1484.1 1839.6,1485.3 1841.3,1484.8 1843.0,1485.6 1844.7,1484.7 1846.4,1484.6 1848.1,1483.6 1849.8,1484.9 1851.5,1483.9 1853.2,1483.5 1854.9,1484.8 1856.6,1485.7 1858.3,1483.3 1860.0,1482.7 1861.7,1482.8 1863.4,1483.5 1865.1,1483.6 1866.8,1484.2 1868.5,1485.2 1870.2,1483.8 1871.9,1484.4 1873.6,1482.8 1875.3,1483.0 1877.0,1484.8 1878.7,1484.0 1880.4,1483.5 1882.1,1482.7 1883.8,1483.7 1885.5,1482.9 1887.2,1483.0 1888.9,1483.4 1890.6,1485.1 1892.3,1484.6 1894.0,1484.5 1895.7,1485.5 1897.4,1484.7 1899.1,1483.1 1900.8,1485.3 1902.5,1482.9 1904.2,1483.8 1905.9,1484.0 1907.6,1483.0 1909.3,1482.5 1911.0,1484.5 1912.7,1482.8 1914.4,1482.8 1916.1,1482.6 1917.8,1482.7 1919.5,1483.1 1921.2,1483.7 1922.9,1483.6 1924.6,1485.1 1926.3,1484.5 1928.0,1484.1 1929.7,1484.7 1931.4,1483.7 1933.1,1482.8 1934.8,1484.2 1936.5,1484.6 1938.2,1484.1 1939.9,1484.1 1941.6,1483.1 1943.3,1484.8 1945.0,1484.0 1946.7,1483.2 1948.4,1484.7 1950.1,1484.2 1951.8,1482.8 1953.5,1484.7 1955.2,1484.3 1956.9,1485.4 1958.6,1485.2 1960.3,1483.4 1962.0,1482.7 1963.7,1482.3 1965.4,1483.4 1967.1,1483.9 1968.8,1484.2 1970.5,1482.7 1972.2,1485.2 1973.9,1485.3 1975.6,1484.5 1977.3,1484.0 1979.0,1485.4 1980.7,1487.4 1982.4,1482.9 1984.1,1482.5 1985.8,1482.9 1987.5,1483.1 1989.2,1483.8 1990.9,1482.7 1992.6,1482.3 1994.3,1485.0 1996.0,1483.8 1997.7,1484.9 1999.4,1485.2 2001.1,1483.2 2002.8,1483.8 2004.5,1484.1 2006.2,1483.6 2007.9,1481.8 2009.6,1484.4 2011.3,1484.9 2013.0,1485.0 2014.7,1485.0 2016.4,1486.5 2018.1,1482.6 2019.8,1483.4 2021.5,1484.0 2023.2,1484.1 2024.9,1485.2 2026.6,1485.4 2028.3,1485.7 2030.0,1483.9 2031.7,1484.5 2033.4,1483.2 2035.1,1485.2 2036.8,1483.3 2038.5,1484.8 2040.2,1485.7 2041.9,1484.2 2043.6,1483.5 2045.3,1485.3 2047.0,1484.8 2048.7,1483.3 2050.4,1482.5 2052.1,1483.6 2053.8,1485.2 2055.5,1484.8 2057.2,1485.0 2058.9,1485.7 2060.6,1485.0 2062.3,1483.2 2064.0,1483.7 2065.7,1483.0 2067.4,1482.8 2069.1,1483.2 2070.8,1484.3 2072.5,1483.9 2074.2,1483.1 2075.9,1485.0 2077.6,1484.7 2079.3,1484.3 2081.0,1483.5 2082.7,1482.9 2084.4,1484.4 2086.1,1485.3 2087.8,1483.1 2089.5,1484.1 2091.2,1484.2 2092.9,1485.5 2094.6,1485.6 2096.3,1483.7 2098.0,1483.2 2099.7,1483.1 2101.4,1482.8 2103.1,1485.0 2104.8,1484.8 2106.5,1482.8 2108.2,1482.6 2109.9,1483.5 2111.6,1482.9 2113.3,1481.6 2115.0,1484.4 2116.7,1484.6 2118.4,1485.2 2120.1,1484.3 2121.8,1482.8 2123.5,1483.4 2125.2,1482.6 2126.9,1483.6 2128.6,1483.2 2130.3,1482.7 2132.0,1482.7 2133.7,1484.4 2135.4,1483.9 2137.1,1483.7 2138.8,1485.2 2140.5,1483.1 2142.2,1484.4 2143.9,1483.4 2145.6,1480.5 2147.3,1482.9 2149.0,1483.7 2150.7,1485.0 2152.4,1485.4 2154.1,1484.0 2155.8,1485.2 2157.5,1484.6 2159.2,1485.6 2160.9,1484.3 2162.6,1485.5 2164.3,1482.9 2166.0,1483.7 2167.7,1484.7 2169.4,1485.4 2171.1,1484.1 2172.8,1483.5 2174.5,1483.3 2176.2,1482.6 2177.9,1482.2 2179.6,1482.8 2181.3,1483.4 2183.0,1484.7 2184.7,1481.4 2186.4,1482.8 2188.1,1484.2 2189.8,1482.6 2191.5,1484.7 2193.2,1483.2 2194.9,1482.7 2196.6,1484.9 2198.3,1485.3 2200.0,1484.7 2201.7,1483.7 2203.4,1484.6 2205.1,1484.9 2206.8,1482.8 2208.5,1483.7 2210.2,1486.2 2211.9,1483.6 2213.6,1482.6 2215.3,1482.3 2217.0,1484.1 2218.7,1482.7 2220.4,1485.1 2222.1,1484.5 2223.8,1484.1 2225.5,1484.3 2227.2,1483.8 2228.9,1484.2 2230.6,1484.9 2232.3,1484.9 2234.0,1484.2 2235.7,1484.7 2237.4,1483.1 2239.1,1484.1 2240.8,1484.2 2242.5,1483.8 2244.2,1484.3 2245.9,1483.9 2247.6,1484.5 2249.3,1485.6 2251.0,1484.9 2252.7,1481.4 2254.4,1483.7 2256.1,1485.3 2257.8,1483.7 2259.5,1485.2 2261.2,1483.0 2262.9,1482.6 2264.6,1483.7 2266.3,1480.4 2268.0,1481.9 2269.7,1484.1 2271.4,1484.4 2273.1,1485.4 2274.8,1483.9 2276.5,1483.7 2278.2,1485.2 2279.9,1483.9 2281.6,1483.7 2283.3,1482.7 2285.0,1484.4 2286.7,1485.2 2288.4,1483.4 2290.1,1482.7 2291.8,1484.5 2293.5,1485.0 2295.2,1483.9 2296.9,1484.3 2298.6,1484.4 2300.3,1484.6 2302.0,1485.1 2303.7,1484.8 2305.4,1483.6 2307.1,1484.5 2308.8,1484.5 2310.5,1482.7 2312.2,1482.3 2313.9,1482.9 2315.6,1482.4 2317.3,1484.6 2319.0,1484.9 2320.7,1482.9 2322.4,1487.8 2324.1,1484.4 2325.8,1484.4 2327.5,1485.1 2329.2,1484.5 2330.9,1485.5 2332.6,1484.3 2334.3,1485.1 2336.0,1485.5 2337.7,1484.1 2339.4,1484.6 2341.1,1483.5 2342.8,1484.9 2344.5,1483.6 2346.2,1485.4 2347.9,1484.9 2349.6,1485.1 2351.3,1485.1 2353.0,1483.1 2354.7,1482.6 2356.4,1485.0 2358.1,1484.2 2359.8,1484.5 2361.5,1483.9 2363.2,1484.6 2364.9,1484.7 2366.6,1484.5 2368.3,1483.4 2370.0,1485.0 2371.7,1483.1 2373.4,1484.9 2375.1,1483.3 2376.8,1482.9 2378.5,1482.3 2380.2,1484.3 2381.9,1484.5 2383.6,1484.0 2385.3,1483.6 2387.0,1484.2 2388.7,1484.8 2390.4,1485.1 2392.1,1484.1 2393.8,1483.8 2395.5,1483.4 2397.2,1483.3 2398.9,1484.2 2400.6,1484.1 2402.3,1483.1 2404.0,1483.6 2405.7,1483.9 2407.4,1484.4 2409.1,1483.7 2410.8,1485.3 2412.5,1483.8 2414.2,1484.2 2415.9,1485.2 2417.6,1483.6 2419.3,1482.7 2421.0,1483.8 2422.7,1483.7 2424.4,1483.2 2426.1,1484.8 2427.8,1483.5 2429.5,1484.2 2431.2,1482.9 2432.9,1484.2 2434.6,1483.0 2436.3,1483.5 2438.0,1485.0 2439.7,1484.2 2441.4,1484.5 2443.1,1483.3 2444.8,1484.0 2446.5,1485.3 2448.2,1485.0 2449.9,1485.2 2451.6,1485.2 2453.3,1483.2 2455.0,1485.0 2456.7,1481.1 2458.4,1483.2 2460.1,1485.0 2461.8,1484.3 2463.5,1482.7 2465.2,1484.0 2466.9,1484.2 2468.6,1484.5 2470.3,1483.4 2472.0,1484.8 2473.7,1485.9 2475.4,1484.7 2477.1,1485.0 2478.8,1484.2 2480.5,1485.6 2482.2,1485.5 2483.9,1487.5 2485.6,1484.2 2487.3,1483.7 2489.0,1485.4 2490.7,1485.6 2492.0,1480.4 2499.4,1502.6 2504.0,1492.4 2512.4,1496.0 2513.4,1600.0 2514.3,1694.0 2575.6,1694.0 2578.3,1462.7 2581.1,1499.9 2590.0,1497.0 2597.8,1496.0 2599.7,1489.6 2602.0,1489.5 2605.0,1490.0 2608.0,1489.6 2611.0,1490.3 2614.0,1490.1 2617.0,1489.3 2620.0,1489.9 2623.0,1490.4 2626.0,1489.7 2629.0,1490.6 2632.0,1490.7 2635.0,1489.6 2638.0,1489.9 2641.0,1490.6 2644.0,1489.7 2647.0,1489.4 2650.0,1489.7 2653.0,1489.7 2656.0,1489.5 2659.0,1490.4 2662.0,1490.5 2665.0,1490.8 2668.0,1490.6 2671.0,1490.3 2674.0,1489.6 2677.0,1490.3 2680.0,1490.7 2683.0,1490.1 2686.0,1490.0 2689.0,1490.7 2692.0,1489.5 2695.0,1490.2 2698.0,1490.0 2701.0,1490.1 2704.0,1489.6 2707.0,1490.0 2710.0,1489.5 2713.0,1489.7 2716.0,1489.7 2719.0,1489.6 2722.0,1489.3 2725.0,1490.2 2728.0,1490.3 2731.0,1490.7 2734.0,1490.1 2737.0,1490.7 2740.0,1490.7 2743.0,1490.0 2746.4,1490.6 2752.0,1494.8 2755.0,1495.3 2758.0,1494.5 2761.0,1494.4 2764.0,1494.8 2767.0,1495.2 2770.0,1495.4 2773.0,1495.1 2776.0,1495.1 2779.0,1495.1 2782.0,1495.3 2785.0,1494.8 2788.0,1495.1 2791.0,1495.3 2794.0,1495.4 2797.0,1495.2 2800.0,1494.7 2803.0,1494.6 2806.0,1495.2 2809.0,1494.6 2812.0,1494.9 2814.0,1494.8" fill="none" stroke="#e0b400" stroke-width="4.2" stroke-linejoin="round"/><polyline points="1588.0,1675.6 1594.0,1675.7 1600.0,1675.8 1606.0,1675.9 1612.0,1675.7 1618.0,1675.6 1624.0,1675.5 1630.0,1675.5 1636.0,1675.7 1642.0,1675.5 1648.0,1675.6 1654.0,1675.5 1660.0,1675.5 1666.0,1675.6 1672.0,1675.8 1678.0,1675.8 1684.0,1675.6 1690.0,1675.5 1696.0,1675.5 1702.0,1675.7 1708.0,1675.8 1714.0,1675.9 1720.0,1675.9 1726.0,1675.9 1732.0,1676.0 1738.0,1676.0 1744.0,1675.8 1750.0,1675.9 1756.0,1675.8 1762.0,1675.9 1768.0,1675.8 1774.0,1675.7 1780.0,1675.7 1786.0,1675.7 1792.0,1675.6 1798.0,1675.5 1804.0,1675.7 1810.0,1675.8 1816.0,1676.0 1822.0,1675.9 1828.0,1675.8 1834.0,1675.9 1840.0,1675.7 1846.0,1675.7 1852.0,1675.7 1858.0,1675.6 1864.0,1675.5 1870.0,1675.6 1876.0,1675.5 1882.0,1675.6 1888.0,1675.7 1894.0,1675.7 1900.0,1675.5 1906.0,1675.6 1912.0,1675.5 1918.0,1675.5 1924.0,1675.5 1930.0,1675.5 1936.0,1675.4 1942.0,1675.6 1948.0,1675.8 1954.0,1675.7 1960.0,1675.8 1966.0,1675.9 1972.0,1675.6 1978.0,1675.5 1984.0,1675.7 1990.0,1675.8 1996.0,1675.8 2002.0,1675.6 2008.0,1675.6 2014.0,1675.8 2020.0,1675.9 2026.0,1675.9 2032.0,1675.7 2038.0,1675.8 2044.0,1675.7 2050.0,1675.8 2056.0,1675.6 2062.0,1675.8 2068.0,1675.8 2074.0,1675.9 2080.0,1675.7 2086.0,1675.7 2092.0,1675.7 2098.0,1675.8 2104.0,1675.7 2110.0,1675.8 2116.0,1675.7 2122.0,1675.6 2128.0,1675.5 2134.0,1675.7 2140.0,1675.5 2146.0,1675.5 2152.0,1675.4 2158.0,1675.6 2164.0,1675.7 2170.0,1675.7 2176.0,1675.5 2182.0,1675.6 2188.0,1675.6 2194.0,1675.5 2200.0,1675.4 2206.0,1675.7 2212.0,1675.6 2218.0,1675.5 2224.0,1675.5 2230.0,1675.6 2236.0,1675.5 2242.0,1675.6 2248.0,1675.6 2254.0,1675.8 2260.0,1675.5 2266.0,1675.5 2272.0,1675.6 2278.0,1675.8 2284.0,1675.8 2290.0,1675.7 2296.0,1675.8 2302.0,1675.7 2308.0,1675.5 2314.0,1675.6 2320.0,1675.8 2326.0,1675.9 2332.0,1675.7 2338.0,1675.8 2344.0,1675.9 2350.0,1675.7 2356.0,1675.7 2362.0,1675.7 2368.0,1675.6 2374.0,1675.5 2380.0,1675.5 2386.0,1675.5 2392.0,1675.4 2398.0,1675.5 2404.0,1675.4 2410.0,1675.7 2416.0,1675.7 2422.0,1675.5 2428.0,1675.7 2434.0,1675.6 2440.0,1675.6 2446.0,1675.7 2452.0,1675.6 2458.0,1675.6 2464.0,1675.6 2470.0,1675.5 2476.0,1675.7 2482.0,1675.6 2488.0,1675.8 2494.0,1675.6 2499.0,1675.7 2500.0,1674.0 2512.0,1674.0 2514.0,1694.0 2576.0,1694.0 2580.0,1664.2 2597.8,1664.2 2600.0,1668.8 2814.0,1668.8" fill="none" stroke="#5794f2" stroke-width="4.2" stroke-linejoin="round"/></svg>
<div class="t" style="top:1678.99px;left:1505.16px;font-size:26px;color:#24292e;letter-spacing:0.550px;">0 kg/h</div>
<div class="t" style="top:1592.42px;left:1475.20px;font-size:26px;color:#24292e;letter-spacing:0.550px;">100 kg/h</div>
<div class="t" style="top:1505.85px;left:1475.20px;font-size:26px;color:#24292e;letter-spacing:0.550px;">200 kg/h</div>
<div class="t" style="top:1419.28px;left:1475.20px;font-size:26px;color:#24292e;letter-spacing:0.550px;">300 kg/h</div>
<div class="t" style="top:1709.29px;left:1553.23px;font-size:26px;color:#24292e;letter-spacing:1.100px;">00:00</div>
<div class="t" style="top:1709.29px;left:1706.65px;font-size:26px;color:#24292e;letter-spacing:1.100px;">03:00</div>
<div class="t" style="top:1709.29px;left:1860.07px;font-size:26px;color:#24292e;letter-spacing:1.100px;">06:00</div>
<div class="t" style="top:1709.29px;left:2013.50px;font-size:26px;color:#24292e;letter-spacing:1.100px;">09:00</div>
<div class="t" style="top:1709.29px;left:2166.46px;font-size:26px;color:#24292e;letter-spacing:1.100px;">12:00</div>
<div class="t" style="top:1709.29px;left:2319.88px;font-size:26px;color:#24292e;letter-spacing:1.100px;">15:00</div>
<div class="t" style="top:1709.29px;left:2473.30px;font-size:26px;color:#24292e;letter-spacing:1.100px;">18:00</div>
<div class="t" style="top:1709.29px;left:2627.04px;font-size:26px;color:#24292e;letter-spacing:1.100px;">21:00</div>
<div class="t" style="top:1747.24px;left:1523.70px;font-size:25px;color:#1f62e0;-webkit-text-stroke:0.55px #1f62e0;letter-spacing:1.125px;">Name</div>
<div class="t" style="top:1747.24px;left:2749.60px;font-size:25px;color:#1f62e0;-webkit-text-stroke:0.55px #1f62e0;">Last</div>
<div style="position:absolute;left:1466px;top:1784px;width:1364px;height:2px;background:#e4e5e7"></div>
<div style="position:absolute;left:1482px;top:1803.4px;width:28px;height:8px;background:#56a64b;border-radius:4px"></div><div class="t" style="top:1794.39px;left:1523.62px;font-size:26px;color:#24292e;letter-spacing:0.269px;">Extruder A Durchsatz</div><div class="t" style="top:1794.39px;left:2707.50px;font-size:26px;color:#24292e;letter-spacing:0.109px;">27.6 kg/h</div>
<div style="position:absolute;left:1482px;top:1851.4px;width:28px;height:8px;background:#e0b400;border-radius:4px"></div><div class="t" style="top:1842.39px;left:1523.62px;font-size:26px;color:#24292e;letter-spacing:0.118px;">Extruder B Durchsatz</div><div class="t" style="top:1842.39px;left:2709.70px;font-size:26px;color:#24292e;letter-spacing:0.850px;">230 kg/h</div>
<div style="position:absolute;left:0;top:0;width:2880px;height:1910px;overflow:hidden"><div style="position:absolute;left:1482px;top:1897.3px;width:28px;height:8px;background:#5794f2;border-radius:4px"></div><div class="t" style="top:1888.29px;left:1523.62px;font-size:26px;color:#24292e;letter-spacing:0.043px;">Extruder C Durchsatz</div><div class="t" style="top:1888.29px;left:2704.10px;font-size:26px;color:#24292e;letter-spacing:0.534px;">29.0 kg/h</div></div>
<div style="position:absolute;left:1466px;top:1832px;width:1364px;height:2px;background:#e4e5e7"></div>
<div style="position:absolute;left:1466px;top:1878px;width:1364px;height:2px;background:#e4e5e7"></div></div>
<div style="position:absolute;left:32px;top:1944px;width:2816px;height:60px;background:#fff"></div>
<svg style="position:absolute;left:53.0px;top:1966.0px;" width="14" height="20" viewBox="0 0 14 20"><polyline points="3,3 11,10.0 3,17" fill="none" stroke="#24292e" stroke-width="2.8" stroke-linecap="round" stroke-linejoin="round"/></svg>
<div class="t" style="top:1955.22px;left:73.78px;font-size:34px;color:#24292e;-webkit-text-stroke:0.75px #24292e;letter-spacing:0.442px;">Process Parameters (Click to Expand)</div>
<div class="t" style="top:1964.18px;left:698.62px;font-size:24px;color:#5b5f63;font-style:italic;letter-spacing:0.565px;">(1 panel)</div>
<svg style="position:absolute;left:2824px;top:1954.6px;" width="17" height="38" viewBox="0 0 17 38"><rect x="0.0" y="0.0" width="5.4" height="5.4" fill="#3d3f42"/><rect x="10.6" y="0.0" width="5.4" height="5.4" fill="#3d3f42"/><rect x="0.0" y="10.5" width="5.4" height="5.4" fill="#3d3f42"/><rect x="10.6" y="10.5" width="5.4" height="5.4" fill="#3d3f42"/><rect x="0.0" y="21.0" width="5.4" height="5.4" fill="#3d3f42"/><rect x="10.6" y="21.0" width="5.4" height="5.4" fill="#3d3f42"/><rect x="0.0" y="31.5" width="5.4" height="5.4" fill="#3d3f42"/><rect x="10.6" y="31.5" width="5.4" height="5.4" fill="#3d3f42"/></svg>
<div style="position:absolute;left:32px;top:2020px;width:2816px;height:60px;background:#fff"></div>
<svg style="position:absolute;left:53.0px;top:2042.0px;" width="14" height="20" viewBox="0 0 14 20"><polyline points="3,3 11,10.0 3,17" fill="none" stroke="#24292e" stroke-width="2.8" stroke-linecap="round" stroke-linejoin="round"/></svg>
<div class="t" style="top:2031.22px;left:74.97px;font-size:34px;color:#24292e;-webkit-text-stroke:0.75px #24292e;letter-spacing:0.658px;">Quality Metrics (Click to Expand)</div>
<div class="t" style="top:2040.18px;left:622.42px;font-size:24px;color:#5b5f63;font-style:italic;letter-spacing:0.565px;">(1 panel)</div>
<svg style="position:absolute;left:2824px;top:2030.6px;" width="17" height="38" viewBox="0 0 17 38"><rect x="0.0" y="0.0" width="5.4" height="5.4" fill="#3d3f42"/><rect x="10.6" y="0.0" width="5.4" height="5.4" fill="#3d3f42"/><rect x="0.0" y="10.5" width="5.4" height="5.4" fill="#3d3f42"/><rect x="10.6" y="10.5" width="5.4" height="5.4" fill="#3d3f42"/><rect x="0.0" y="21.0" width="5.4" height="5.4" fill="#3d3f42"/><rect x="10.6" y="21.0" width="5.4" height="5.4" fill="#3d3f42"/><rect x="0.0" y="31.5" width="5.4" height="5.4" fill="#3d3f42"/><rect x="10.6" y="31.5" width="5.4" height="5.4" fill="#3d3f42"/></svg>
</body></html>
